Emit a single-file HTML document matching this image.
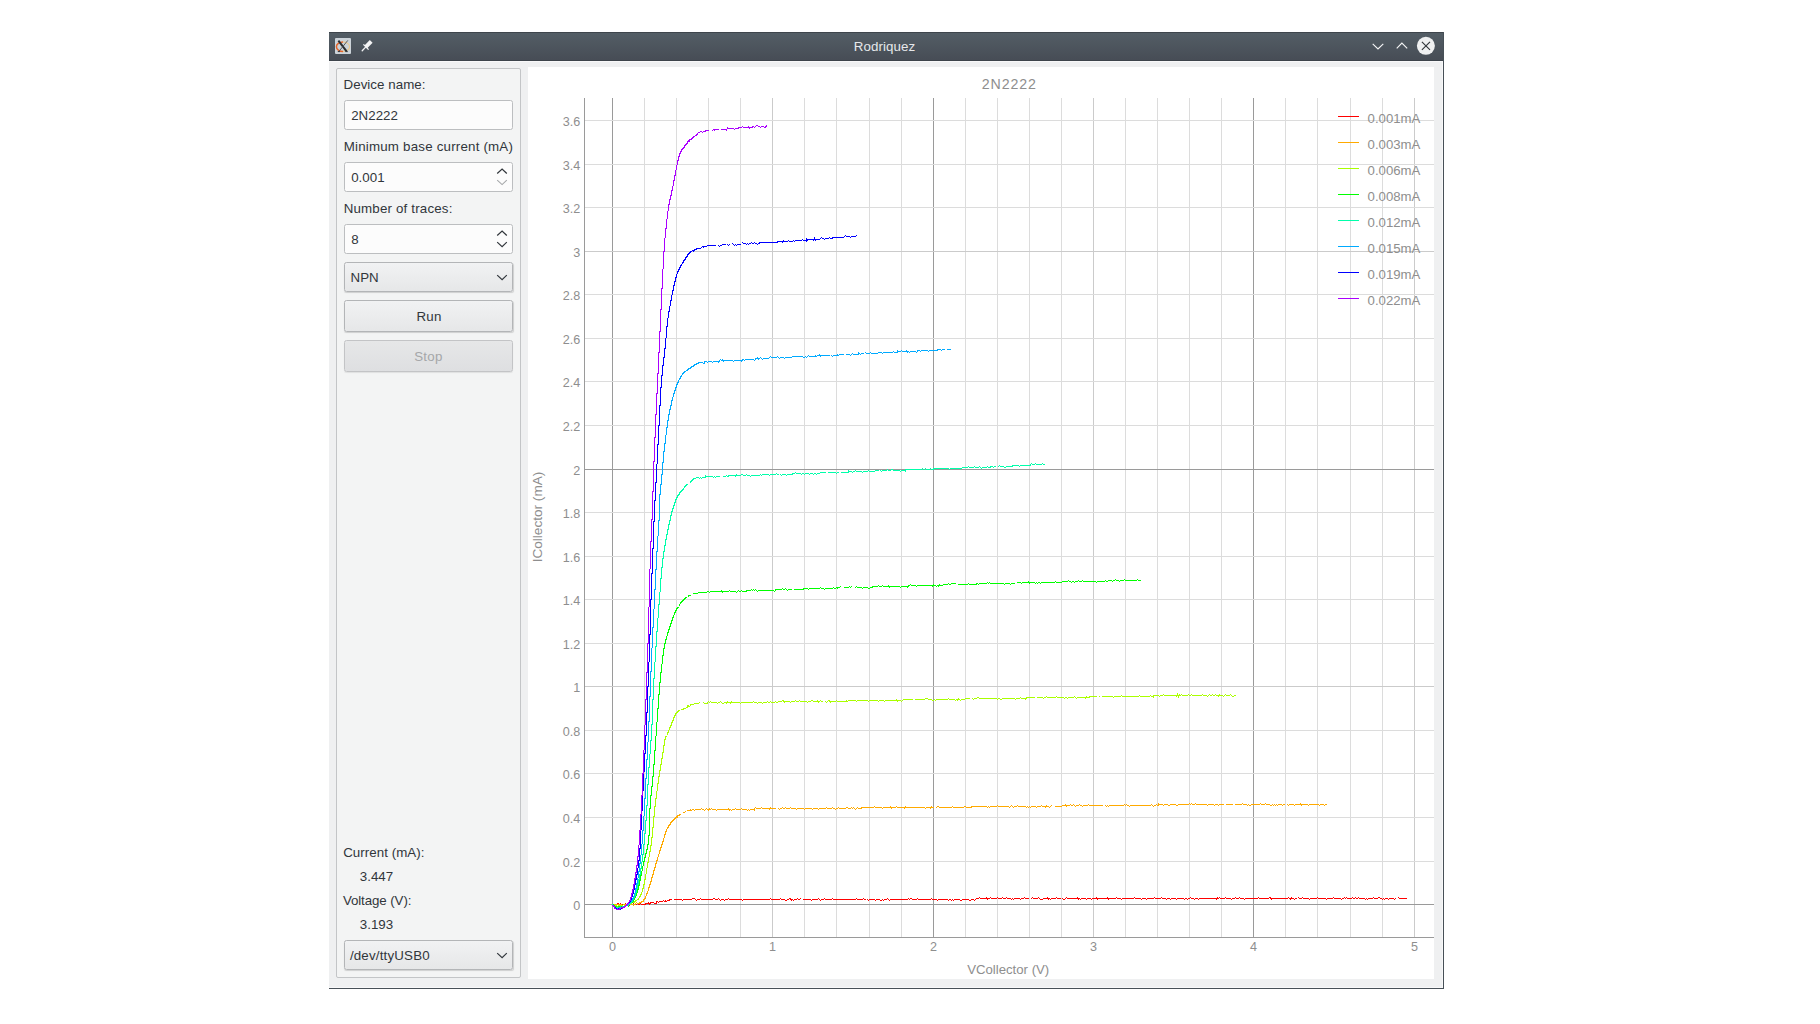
<!DOCTYPE html>
<html><head><meta charset="utf-8"><style>
html,body{margin:0;padding:0;}
body{width:1820px;height:1024px;overflow:hidden;background:#ffffff;position:relative;font-family:"Liberation Sans",sans-serif;}
div{box-sizing:border-box;}
svg{position:absolute;left:0;top:0;}
.fld{position:absolute;border:1px solid #bcbec0;border-radius:2.5px;background:#fcfcfc;}
.btn{position:absolute;border:1px solid #b3b5b7;border-radius:2.5px;background:linear-gradient(#f1f2f3,#e6e7e8);box-shadow:0.5px 1px 1px rgba(0,0,0,0.15);}
.dis{position:absolute;border:1px solid #c3c4c6;border-radius:2.5px;background:linear-gradient(#e6e7e8,#dedfe1);box-shadow:0 1px 1px rgba(0,0,0,0.08);}
</style></head><body>
<div style="position:absolute;left:329px;top:32px;width:1115px;height:29px;background:linear-gradient(#545e66,#464c55);"></div>
<div style="position:absolute;left:329px;top:32px;width:1115px;height:1px;background:#3e454c;"></div>
<div style="position:absolute;left:329px;top:60px;width:1115px;height:1px;background:#3d444b;"></div>
<div style="position:absolute;left:329px;top:61px;width:1114px;height:927px;background:#eff0f1;"></div>
<div style="position:absolute;left:329px;top:61px;width:1114px;height:1px;background:#f8f8f9;"></div>
<div style="position:absolute;left:1442px;top:61px;width:1px;height:927px;background:#f8f8f9;"></div>
<div style="position:absolute;left:329px;top:987px;width:1114px;height:1px;background:#f8f8f9;"></div>
<div style="position:absolute;left:1443px;top:32px;width:1px;height:957px;background:#475057;"></div>
<div style="position:absolute;left:329px;top:988px;width:1115px;height:1px;background:#475057;"></div>
<div style="position:absolute;top:39.62px;font-size:13.33px;line-height:13.33px;color:#e6e8ea;white-space:nowrap;letter-spacing:0.1px;left:584.50px;width:600px;text-align:center;">Rodriquez</div>
<svg width="1820" height="70" style="position:absolute;left:0;top:0">
<rect x="335" y="38" width="16" height="16" rx="1" fill="#ccd3d9"/>
<path d="M 343 42 A 6.6 4.7 0 0 1 343 51.4" fill="none" stroke="#ecc98e" stroke-width="1.1"/>
<path d="M 343 42 A 6.6 4.7 0 0 0 343 51.4" fill="none" stroke="#e4642a" stroke-width="1.5"/>
<path d="M 338.4 40.6 L 346.6 51.3" stroke="#2a2d30" stroke-width="2.0" stroke-linecap="butt"/>
<path d="M 347.8 40.4 L 338.6 51.8" stroke="#4a4e52" stroke-width="0.9"/>
<path d="M 337.8 51.6 L 340 51.6 M 345.5 51.6 L 347.8 51.6" stroke="#2a2d30" stroke-width="0.9"/>
<path d="M 367.2 48.2 L 364.4 45.4 L 369.8 40.0 L 372.6 42.8 Z" fill="#f4f4f5"/>
<path d="M 363.4 44.4 L 368.6 49.6" stroke="#f4f4f5" stroke-width="1.3"/>
<path d="M 365.6 47.1 L 362.2 50.7" stroke="#f4f4f5" stroke-width="1.3" stroke-linecap="round"/>
<polyline points="1372.7,43.8 1378,49 1383.3,43.8" fill="none" stroke="#f5f5f6" stroke-width="1.15"/>
<polyline points="1396.7,48.4 1401.9,43.1 1407.2,48.4" fill="none" stroke="#f5f5f6" stroke-width="1.15"/>
<circle cx="1425.9" cy="45.8" r="9" fill="#eff0f1"/>
<path d="M 1421.9 41.9 L 1430 49.9 M 1430 41.9 L 1421.9 49.9" stroke="#31363b" stroke-width="1.15"/>
</svg>
<div style="position:absolute;left:336px;top:68px;width:185px;height:910px;border:1px solid #c3c5c7;border-radius:2px;background:#f3f4f4;"></div>
<div style="position:absolute;top:77.72px;font-size:13.33px;line-height:13.33px;color:#31363b;white-space:nowrap;letter-spacing:0.05px;left:343.50px;">Device name:</div>
<div class="fld" style="left:344px;top:100px;width:169px;height:30px;"></div>
<div style="position:absolute;top:108.62px;font-size:13.33px;line-height:13.33px;color:#31363b;white-space:nowrap;left:351.20px;">2N2222</div>
<div style="position:absolute;top:139.52px;font-size:13.33px;line-height:13.33px;color:#31363b;white-space:nowrap;letter-spacing:0.2px;left:343.70px;">Minimum base current (mA)</div>
<div class="fld" style="left:344px;top:162px;width:169px;height:30px;"></div>
<div style="position:absolute;top:170.52px;font-size:13.33px;line-height:13.33px;color:#31363b;white-space:nowrap;left:351.20px;">0.001</div>
<div style="position:absolute;top:201.52px;font-size:13.33px;line-height:13.33px;color:#31363b;white-space:nowrap;letter-spacing:0.17px;left:343.70px;">Number of traces:</div>
<div class="fld" style="left:344px;top:224px;width:169px;height:30px;"></div>
<div style="position:absolute;top:233.42px;font-size:13.33px;line-height:13.33px;color:#31363b;white-space:nowrap;left:351.20px;">8</div>
<div class="btn" style="left:344px;top:262px;width:169px;height:30px;"></div>
<div style="position:absolute;top:270.52px;font-size:13.33px;line-height:13.33px;color:#31363b;white-space:nowrap;left:350.60px;">NPN</div>
<div class="btn" style="left:344px;top:300px;width:169px;height:32px;"></div>
<div style="position:absolute;top:310.02px;font-size:13.33px;line-height:13.33px;color:#31363b;white-space:nowrap;letter-spacing:0.2px;left:129.00px;width:600px;text-align:center;">Run</div>
<div class="dis" style="left:344px;top:340px;width:169px;height:32px;"></div>
<div style="position:absolute;top:349.62px;font-size:13.33px;line-height:13.33px;color:#a5a7a9;white-space:nowrap;letter-spacing:0.2px;left:128.40px;width:600px;text-align:center;">Stop</div>
<div style="position:absolute;top:846.12px;font-size:13.33px;line-height:13.33px;color:#31363b;white-space:nowrap;letter-spacing:0.05px;left:343.20px;">Current (mA):</div>
<div style="position:absolute;top:870.22px;font-size:13.33px;line-height:13.33px;color:#31363b;white-space:nowrap;left:359.80px;">3.447</div>
<div style="position:absolute;top:894.22px;font-size:13.33px;line-height:13.33px;color:#31363b;white-space:nowrap;letter-spacing:-0.1px;left:342.90px;">Voltage (V):</div>
<div style="position:absolute;top:917.52px;font-size:13.33px;line-height:13.33px;color:#31363b;white-space:nowrap;left:359.80px;">3.193</div>
<div class="btn" style="left:344px;top:940px;width:169px;height:30px;"></div>
<div style="position:absolute;top:948.72px;font-size:13.33px;line-height:13.33px;color:#31363b;white-space:nowrap;letter-spacing:0.18px;left:349.90px;">/dev/ttyUSB0</div>
<svg width="1820" height="1024" style="position:absolute;left:0;top:0">
<polyline points="497.2,173.5 502.1,169 506.8,173.5" fill="none" stroke="#31363b" stroke-width="1.2"/>
<polyline points="497.2,180.1 502.1,184.6 506.8,180.1" fill="none" stroke="#a6a8aa" stroke-width="1.1"/>
<polyline points="497.2,235.5 502.1,231 506.8,235.5" fill="none" stroke="#31363b" stroke-width="1.2"/>
<polyline points="497.2,242.1 502.1,246.6 506.8,242.1" fill="none" stroke="#31363b" stroke-width="1.2"/>
<polyline points="497.2,275.1 502.1,279.6 506.8,275.1" fill="none" stroke="#31363b" stroke-width="1.2"/>
<polyline points="497.2,953.1 502.1,957.6 506.8,953.1" fill="none" stroke="#31363b" stroke-width="1.2"/>
</svg>
<div style="position:absolute;left:528px;top:67px;width:906px;height:912px;background:#ffffff;"></div>
<svg width="1820" height="1024" style="position:absolute;left:0;top:0" shape-rendering="crispEdges">
<rect x="612" y="98" width="1" height="839" fill="#9a9a9a"/>
<rect x="644" y="98" width="1" height="839" fill="#dcdcdc"/>
<rect x="676" y="98" width="1" height="839" fill="#dcdcdc"/>
<rect x="708" y="98" width="1" height="839" fill="#dcdcdc"/>
<rect x="740" y="98" width="1" height="839" fill="#dcdcdc"/>
<rect x="772" y="98" width="1" height="839" fill="#cbcbcb"/>
<rect x="804" y="98" width="1" height="839" fill="#dcdcdc"/>
<rect x="836" y="98" width="1" height="839" fill="#dcdcdc"/>
<rect x="869" y="98" width="1" height="839" fill="#dcdcdc"/>
<rect x="901" y="98" width="1" height="839" fill="#dcdcdc"/>
<rect x="933" y="98" width="1" height="839" fill="#9a9a9a"/>
<rect x="965" y="98" width="1" height="839" fill="#dcdcdc"/>
<rect x="997" y="98" width="1" height="839" fill="#dcdcdc"/>
<rect x="1029" y="98" width="1" height="839" fill="#dcdcdc"/>
<rect x="1061" y="98" width="1" height="839" fill="#dcdcdc"/>
<rect x="1093" y="98" width="1" height="839" fill="#cbcbcb"/>
<rect x="1125" y="98" width="1" height="839" fill="#dcdcdc"/>
<rect x="1157" y="98" width="1" height="839" fill="#dcdcdc"/>
<rect x="1189" y="98" width="1" height="839" fill="#dcdcdc"/>
<rect x="1221" y="98" width="1" height="839" fill="#dcdcdc"/>
<rect x="1253" y="98" width="1" height="839" fill="#9a9a9a"/>
<rect x="1285" y="98" width="1" height="839" fill="#dcdcdc"/>
<rect x="1317" y="98" width="1" height="839" fill="#dcdcdc"/>
<rect x="1350" y="98" width="1" height="839" fill="#dcdcdc"/>
<rect x="1382" y="98" width="1" height="839" fill="#dcdcdc"/>
<rect x="1414" y="98" width="1" height="839" fill="#cbcbcb"/>
<rect x="585" y="904" width="849" height="1" fill="#9a9a9a"/>
<rect x="585" y="861" width="849" height="1" fill="#dcdcdc"/>
<rect x="585" y="817" width="849" height="1" fill="#dcdcdc"/>
<rect x="585" y="773" width="849" height="1" fill="#dcdcdc"/>
<rect x="585" y="730" width="849" height="1" fill="#dcdcdc"/>
<rect x="585" y="686" width="849" height="1" fill="#cbcbcb"/>
<rect x="585" y="643" width="849" height="1" fill="#dcdcdc"/>
<rect x="585" y="599" width="849" height="1" fill="#dcdcdc"/>
<rect x="585" y="556" width="849" height="1" fill="#dcdcdc"/>
<rect x="585" y="512" width="849" height="1" fill="#dcdcdc"/>
<rect x="585" y="469" width="849" height="1" fill="#9a9a9a"/>
<rect x="585" y="425" width="849" height="1" fill="#dcdcdc"/>
<rect x="585" y="381" width="849" height="1" fill="#dcdcdc"/>
<rect x="585" y="338" width="849" height="1" fill="#dcdcdc"/>
<rect x="585" y="294" width="849" height="1" fill="#dcdcdc"/>
<rect x="585" y="251" width="849" height="1" fill="#cbcbcb"/>
<rect x="585" y="207" width="849" height="1" fill="#dcdcdc"/>
<rect x="585" y="164" width="849" height="1" fill="#dcdcdc"/>
<rect x="585" y="120" width="849" height="1" fill="#dcdcdc"/>
<rect x="584" y="98" width="1" height="840" fill="#9a9a9a"/>
<rect x="584" y="937" width="850" height="1" fill="#9a9a9a"/>
<rect x="1338" y="116" width="21" height="1" fill="#ff0000"/>
<rect x="1338" y="142" width="21" height="1" fill="#ffaa00"/>
<rect x="1338" y="168" width="21" height="1" fill="#aaff00"/>
<rect x="1338" y="194" width="21" height="1" fill="#00ff00"/>
<rect x="1338" y="220" width="21" height="1" fill="#00ffaa"/>
<rect x="1338" y="246" width="21" height="1" fill="#00aaff"/>
<rect x="1338" y="272" width="21" height="1" fill="#0000ff"/>
<rect x="1338" y="298" width="21" height="1" fill="#aa00ff"/>
<polyline points="612.5,904.5 613.5,904.5 614.5,904.5 615.5,904.5 616.5,904.5 617.5,903.5 618.5,903.5 619.5,904.5 620.5,903.5 621.5,905.5 622.5,904.5 623.5,904.5 624.5,904.5 625.5,903.5 626.5,904.5 627.5,904.5 628.5,904.5 629.5,905.5 630.5,903.5 631.5,903.5 632.5,904.5 633.5,903.5 634.5,904.5 635.5,904.5 636.5,904.5 637.5,903.5 638.5,904.5 639.5,904.5 640.5,903.5 641.5,904.5 642.5,904.5 643.5,904.5 644.5,904.5 645.5,904.5 645.5,903.5 646.5,903.5 647.5,903.5 648.5,902.5 649.5,904.5 650.5,903.5 650.5,902.5 651.5,902.5 652.5,902.5 653.5,902.5 654.5,903.5 655.5,903.5 656.5,903.5 656.5,901.5 657.5,901.5 658.5,902.5 659.5,901.5 660.5,901.5 661.5,901.5 662.5,901.5 663.5,900.5 664.5,901.5 665.5,901.5 665.5,900.5 666.5,901.5 667.5,900.5 668.5,900.5 669.5,900.5 669.5,899.5 670.5,899.5 671.5,899.5" fill="none" stroke="#ff0000" stroke-width="1"/>
<polyline points="673.5,899.5 674.5,899.5 675.5,899.5 676.5,899.5 677.5,899.5 678.5,899.5 679.5,899.5 680.5,899.5 681.5,899.5 682.5,900.5 683.5,899.5 684.5,899.5 685.5,899.5 686.5,899.5 687.5,899.5 688.5,899.5 689.5,899.5 690.5,899.5 691.5,899.5 692.5,898.5 693.5,898.5 694.5,898.5 695.5,899.5 696.5,900.5 697.5,899.5 698.5,899.5 699.5,899.5 700.5,898.5 701.5,899.5 702.5,899.5 703.5,899.5 704.5,899.5 705.5,899.5 706.5,899.5 707.5,899.5 708.5,899.5 709.5,899.5 710.5,899.5 711.5,899.5 712.5,899.5 713.5,898.5 714.5,898.5 715.5,899.5 716.5,899.5 717.5,899.5 718.5,898.5 719.5,899.5 720.5,900.5 721.5,899.5 722.5,899.5 723.5,899.5 724.5,900.5 725.5,899.5 726.5,899.5 727.5,899.5 728.5,898.5 729.5,899.5 730.5,899.5 731.5,899.5 732.5,899.5 733.5,899.5 734.5,899.5 735.5,899.5 736.5,899.5 737.5,899.5 738.5,899.5 739.5,899.5 740.5,899.5 741.5,899.5 742.5,900.5 743.5,899.5 744.5,899.5 745.5,899.5 746.5,899.5 747.5,899.5 748.5,899.5 749.5,899.5 750.5,899.5 751.5,899.5 752.5,899.5 753.5,899.5 754.5,899.5 755.5,899.5 756.5,899.5 757.5,899.5 758.5,899.5 759.5,899.5 760.5,899.5 761.5,899.5 762.5,899.5 763.5,899.5 764.5,899.5 765.5,899.5 766.5,899.5 767.5,899.5 768.5,899.5 769.5,899.5 770.5,898.5 771.5,899.5 772.5,899.5 773.5,899.5 774.5,899.5 775.5,899.5 776.5,899.5 777.5,899.5 778.5,899.5 779.5,899.5 780.5,898.5 781.5,899.5 782.5,899.5 783.5,899.5 784.5,899.5 785.5,900.5 786.5,900.5 787.5,899.5 788.5,899.5 789.5,898.5 790.5,898.5 791.5,900.5 792.5,899.5 793.5,900.5 794.5,899.5 795.5,899.5 796.5,899.5 797.5,898.5 798.5,899.5 799.5,899.5 800.5,898.5" fill="none" stroke="#ff0000" stroke-width="1"/>
<polyline points="802.5,899.5 803.5,899.5 804.5,899.5 805.5,899.5 806.5,899.5 807.5,899.5 808.5,899.5 809.5,899.5 810.5,899.5 811.5,900.5 812.5,899.5 813.5,899.5 814.5,899.5 815.5,899.5 816.5,899.5 817.5,899.5 818.5,898.5 819.5,899.5 820.5,900.5 821.5,899.5 822.5,899.5 823.5,899.5 824.5,898.5 825.5,899.5 826.5,899.5 827.5,899.5 828.5,899.5 829.5,899.5 830.5,899.5 831.5,899.5 832.5,898.5 833.5,899.5 834.5,899.5 835.5,899.5 836.5,899.5 837.5,899.5 838.5,899.5 839.5,899.5 840.5,899.5 841.5,899.5 842.5,899.5 843.5,899.5 844.5,899.5 845.5,899.5 846.5,899.5 847.5,899.5 848.5,899.5 849.5,899.5 850.5,899.5 851.5,899.5 852.5,899.5 853.5,899.5 854.5,899.5 855.5,899.5 856.5,898.5 857.5,899.5 858.5,899.5 859.5,899.5 860.5,899.5 861.5,899.5 862.5,899.5 863.5,898.5 864.5,899.5 865.5,899.5" fill="none" stroke="#ff0000" stroke-width="1"/>
<polyline points="867.5,899.5 868.5,900.5 869.5,899.5 870.5,899.5 871.5,899.5 872.5,899.5 873.5,899.5 874.5,899.5 875.5,900.5 876.5,899.5 877.5,899.5 878.5,899.5 879.5,899.5 880.5,900.5 881.5,900.5 882.5,899.5 883.5,900.5 884.5,899.5 885.5,899.5 886.5,899.5 887.5,898.5 888.5,899.5 889.5,900.5 890.5,899.5 891.5,899.5 892.5,899.5 893.5,899.5 894.5,899.5 895.5,899.5 896.5,899.5 897.5,899.5 898.5,899.5 899.5,899.5 900.5,899.5 901.5,899.5 902.5,899.5 903.5,899.5 904.5,899.5 905.5,899.5 906.5,899.5 907.5,899.5 908.5,898.5 909.5,899.5 910.5,898.5 911.5,898.5 912.5,899.5 913.5,899.5 914.5,899.5 915.5,899.5 916.5,899.5 917.5,898.5 918.5,899.5 919.5,899.5 920.5,899.5 921.5,899.5 922.5,899.5 923.5,899.5 924.5,899.5 925.5,899.5 926.5,899.5 927.5,899.5 928.5,899.5 929.5,899.5 930.5,899.5 931.5,898.5 932.5,899.5 933.5,899.5 934.5,899.5 935.5,899.5 936.5,899.5 937.5,900.5 938.5,899.5 939.5,899.5 940.5,899.5 941.5,899.5 942.5,899.5 943.5,899.5 944.5,899.5 945.5,899.5 946.5,899.5 947.5,899.5 948.5,900.5 949.5,899.5 950.5,899.5 951.5,900.5 952.5,899.5 953.5,900.5 954.5,899.5 955.5,899.5 956.5,899.5 957.5,899.5 958.5,899.5 959.5,899.5 960.5,900.5 961.5,900.5 962.5,899.5 963.5,899.5 964.5,899.5 965.5,899.5 966.5,899.5 967.5,899.5 968.5,899.5 969.5,900.5 970.5,900.5 971.5,899.5 972.5,899.5 973.5,899.5 974.5,900.5 975.5,899.5 976.5,898.5 976.5,898.5 977.5,898.5 978.5,898.5 979.5,897.5 980.5,898.5 981.5,898.5 982.5,898.5 983.5,898.5 984.5,898.5 985.5,898.5 986.5,897.5 987.5,899.5 988.5,898.5 989.5,898.5 990.5,897.5 991.5,898.5 992.5,898.5 993.5,898.5 994.5,898.5 995.5,898.5 996.5,898.5 997.5,897.5 998.5,898.5 999.5,898.5 1000.5,898.5 1001.5,898.5 1002.5,897.5 1003.5,898.5 1004.5,898.5 1005.5,898.5 1006.5,897.5 1007.5,898.5 1008.5,898.5 1009.5,898.5 1010.5,898.5 1011.5,899.5 1012.5,898.5 1013.5,899.5 1014.5,898.5 1015.5,898.5 1016.5,898.5 1017.5,898.5 1018.5,898.5 1019.5,898.5 1020.5,899.5 1021.5,898.5 1022.5,898.5 1023.5,898.5 1024.5,897.5 1025.5,898.5 1026.5,898.5 1027.5,898.5 1028.5,898.5" fill="none" stroke="#ff0000" stroke-width="1"/>
<polyline points="1030.5,899.5 1031.5,898.5 1032.5,897.5 1033.5,898.5 1034.5,898.5 1035.5,898.5 1036.5,898.5 1037.5,898.5 1038.5,897.5 1039.5,898.5 1040.5,899.5 1041.5,899.5 1042.5,899.5 1043.5,898.5 1044.5,898.5 1045.5,898.5 1046.5,898.5 1047.5,897.5 1048.5,899.5 1049.5,898.5 1050.5,899.5 1051.5,898.5 1052.5,898.5 1053.5,898.5 1054.5,898.5 1055.5,898.5 1056.5,897.5 1057.5,898.5 1058.5,898.5 1059.5,898.5 1060.5,898.5" fill="none" stroke="#ff0000" stroke-width="1"/>
<polyline points="1062.5,898.5 1063.5,899.5 1064.5,899.5 1065.5,898.5 1066.5,897.5 1067.5,898.5 1068.5,898.5 1069.5,898.5 1070.5,898.5 1071.5,898.5 1072.5,898.5 1073.5,898.5 1074.5,898.5 1075.5,898.5 1076.5,898.5 1077.5,897.5 1078.5,899.5 1079.5,898.5 1080.5,899.5 1081.5,898.5 1082.5,898.5 1083.5,898.5 1084.5,898.5 1085.5,898.5 1086.5,899.5 1087.5,898.5 1088.5,898.5 1089.5,898.5 1090.5,898.5 1091.5,899.5 1092.5,898.5 1093.5,898.5 1094.5,898.5 1095.5,898.5 1096.5,897.5 1097.5,899.5 1098.5,898.5 1099.5,898.5 1100.5,898.5 1101.5,898.5 1102.5,898.5 1103.5,898.5 1104.5,898.5 1105.5,898.5 1106.5,898.5 1107.5,897.5 1108.5,899.5 1109.5,898.5 1110.5,898.5 1111.5,898.5 1112.5,898.5 1113.5,898.5 1114.5,898.5 1115.5,898.5 1116.5,897.5 1117.5,898.5 1118.5,898.5 1119.5,898.5 1120.5,898.5 1121.5,899.5 1122.5,898.5 1123.5,898.5 1124.5,898.5 1125.5,898.5 1126.5,898.5 1127.5,898.5 1128.5,898.5 1129.5,898.5 1130.5,898.5 1131.5,898.5 1132.5,898.5 1133.5,898.5 1134.5,897.5 1135.5,898.5 1136.5,898.5 1137.5,898.5 1138.5,898.5 1139.5,898.5 1140.5,898.5 1141.5,899.5 1142.5,898.5 1143.5,898.5 1144.5,898.5 1145.5,898.5 1146.5,899.5 1147.5,898.5 1148.5,898.5 1149.5,898.5 1150.5,898.5 1151.5,898.5 1152.5,898.5 1153.5,898.5 1154.5,897.5 1155.5,898.5 1156.5,898.5 1157.5,898.5 1158.5,898.5 1159.5,898.5 1160.5,898.5 1161.5,897.5 1162.5,898.5 1163.5,898.5 1164.5,898.5 1165.5,898.5 1166.5,899.5 1167.5,898.5 1168.5,898.5 1169.5,898.5 1170.5,899.5 1171.5,898.5 1172.5,898.5 1173.5,898.5 1174.5,898.5 1175.5,898.5 1176.5,899.5 1177.5,898.5 1178.5,898.5 1179.5,898.5 1180.5,898.5 1181.5,898.5 1182.5,898.5 1183.5,898.5 1184.5,899.5 1185.5,898.5 1186.5,898.5 1187.5,899.5 1188.5,898.5 1189.5,898.5 1190.5,897.5 1191.5,898.5 1192.5,898.5 1193.5,898.5 1194.5,899.5 1195.5,898.5 1196.5,898.5 1197.5,898.5 1198.5,899.5 1199.5,898.5 1200.5,898.5 1201.5,898.5 1202.5,898.5 1203.5,898.5 1204.5,898.5 1205.5,898.5 1206.5,898.5 1207.5,898.5 1208.5,898.5 1209.5,898.5 1210.5,898.5 1211.5,898.5 1212.5,898.5 1213.5,898.5 1214.5,898.5 1215.5,898.5 1216.5,899.5 1217.5,897.5 1218.5,898.5 1219.5,897.5 1220.5,898.5 1221.5,898.5 1222.5,898.5 1223.5,898.5 1224.5,898.5 1225.5,897.5 1226.5,898.5 1227.5,898.5 1228.5,898.5 1229.5,898.5 1230.5,898.5 1231.5,899.5 1232.5,898.5 1233.5,898.5 1234.5,898.5 1235.5,897.5 1236.5,898.5 1237.5,898.5 1238.5,898.5 1239.5,897.5 1240.5,898.5 1241.5,898.5 1242.5,898.5 1243.5,898.5 1244.5,899.5 1245.5,898.5 1246.5,898.5 1247.5,898.5 1248.5,898.5 1249.5,898.5 1250.5,898.5 1251.5,898.5 1252.5,898.5 1253.5,898.5 1254.5,898.5 1255.5,898.5 1256.5,898.5 1257.5,898.5 1258.5,897.5 1259.5,898.5 1260.5,898.5 1261.5,898.5 1262.5,898.5 1263.5,898.5 1264.5,898.5 1265.5,898.5 1266.5,898.5 1267.5,898.5 1268.5,898.5 1269.5,897.5 1270.5,897.5 1271.5,899.5 1272.5,898.5 1273.5,898.5 1274.5,898.5 1275.5,898.5 1276.5,898.5 1277.5,898.5 1278.5,898.5 1279.5,898.5 1280.5,898.5 1281.5,898.5 1282.5,898.5 1283.5,898.5 1284.5,898.5 1285.5,898.5 1286.5,898.5 1287.5,898.5 1288.5,897.5 1289.5,898.5 1290.5,899.5 1291.5,897.5 1292.5,898.5 1293.5,898.5 1294.5,899.5 1295.5,898.5 1296.5,898.5" fill="none" stroke="#ff0000" stroke-width="1"/>
<polyline points="1298.5,897.5 1299.5,898.5 1300.5,898.5 1301.5,898.5 1302.5,897.5 1303.5,898.5 1304.5,898.5 1305.5,898.5 1306.5,898.5 1307.5,898.5 1308.5,898.5 1309.5,899.5 1310.5,898.5 1311.5,898.5 1312.5,898.5 1313.5,898.5 1314.5,898.5 1315.5,898.5 1316.5,898.5 1317.5,897.5 1318.5,898.5 1319.5,898.5 1320.5,898.5 1321.5,898.5 1322.5,898.5 1323.5,898.5 1324.5,898.5 1325.5,898.5 1326.5,899.5 1327.5,898.5 1328.5,898.5 1329.5,898.5 1330.5,898.5 1331.5,898.5 1332.5,898.5 1333.5,897.5 1334.5,898.5 1335.5,898.5 1336.5,898.5 1337.5,898.5 1338.5,898.5 1339.5,898.5 1340.5,898.5 1341.5,899.5 1342.5,898.5 1343.5,898.5 1344.5,897.5 1345.5,898.5 1346.5,897.5 1347.5,898.5 1348.5,898.5 1349.5,898.5 1350.5,898.5 1351.5,898.5 1352.5,897.5 1353.5,898.5 1354.5,898.5 1355.5,897.5 1356.5,898.5 1357.5,898.5 1358.5,897.5 1359.5,898.5 1360.5,898.5 1361.5,898.5 1362.5,898.5 1363.5,898.5 1364.5,898.5 1365.5,899.5 1366.5,898.5 1367.5,899.5 1368.5,898.5 1369.5,898.5 1370.5,898.5 1371.5,898.5 1372.5,898.5 1373.5,897.5 1374.5,898.5 1375.5,898.5 1376.5,898.5 1377.5,898.5 1378.5,897.5 1379.5,897.5 1380.5,898.5 1381.5,898.5 1382.5,899.5 1383.5,898.5 1384.5,899.5 1385.5,898.5 1386.5,898.5 1387.5,898.5 1388.5,899.5 1389.5,898.5 1390.5,898.5 1391.5,898.5 1392.5,898.5 1393.5,898.5 1394.5,899.5 1395.5,898.5" fill="none" stroke="#ff0000" stroke-width="1"/>
<polyline points="1397.5,898.5 1398.5,897.5 1399.5,898.5 1400.5,898.5 1401.5,898.5 1402.5,898.5 1403.5,898.5 1404.5,898.5 1405.5,898.5 1406.5,898.5" fill="none" stroke="#ff0000" stroke-width="1"/>
<polyline points="612.5,904.5 613.5,904.5 614.5,904.5 615.5,904.5 616.5,904.5 617.5,904.5 618.5,904.5 619.5,904.5 620.5,904.5 621.5,904.5 622.5,905.5 623.5,904.5 624.5,904.5 625.5,904.5 626.5,904.5 627.5,903.5 628.5,904.5 629.5,904.5 630.5,904.5 631.5,904.5 632.5,904.5 633.5,905.5 634.5,904.5 635.5,904.5 635.5,903.5 636.5,902.5 637.5,903.5 638.5,903.5 639.5,903.5 639.5,902.5 640.5,902.5 641.5,902.5 641.5,901.5 642.5,901.5 643.5,901.5 643.5,900.5 643.5,899.5 644.5,899.5 644.5,898.5 645.5,898.5 645.5,897.5 645.5,896.5 646.5,895.5 646.5,894.5 646.5,893.5 647.5,893.5 647.5,892.5 647.5,891.5 648.5,890.5 648.5,889.5 648.5,888.5 648.5,887.5 649.5,887.5 649.5,886.5 649.5,885.5 649.5,884.5 650.5,884.5 650.5,883.5 650.5,882.5 650.5,881.5 651.5,881.5 651.5,880.5 651.5,879.5 651.5,878.5 651.5,877.5 652.5,877.5 652.5,876.5 652.5,875.5 652.5,874.5 653.5,874.5 653.5,873.5 653.5,872.5 653.5,871.5 653.5,870.5 654.5,870.5 654.5,869.5 654.5,868.5 654.5,867.5 655.5,867.5 655.5,866.5 655.5,865.5 655.5,864.5 655.5,863.5 656.5,863.5 656.5,862.5 656.5,861.5 656.5,860.5 657.5,860.5 657.5,859.5 657.5,858.5 657.5,857.5 658.5,856.5 658.5,855.5 658.5,854.5 659.5,853.5 659.5,852.5 659.5,851.5 659.5,850.5 660.5,850.5 660.5,849.5 660.5,848.5 660.5,847.5 661.5,847.5 661.5,846.5 661.5,845.5 661.5,844.5 662.5,844.5 662.5,843.5 662.5,842.5 662.5,841.5 663.5,841.5 663.5,840.5 663.5,839.5 663.5,838.5 664.5,837.5 664.5,836.5 664.5,835.5 664.5,834.5 665.5,834.5 665.5,833.5 665.5,832.5 665.5,831.5 666.5,831.5 666.5,830.5 666.5,829.5 667.5,828.5 667.5,827.5 668.5,827.5 668.5,826.5 668.5,825.5 669.5,825.5 669.5,824.5 670.5,824.5 670.5,823.5 670.5,822.5 671.5,822.5 671.5,821.5 672.5,821.5 672.5,820.5 673.5,820.5 673.5,819.5 674.5,819.5 674.5,818.5 675.5,818.5 675.5,817.5 676.5,817.5 676.5,816.5 677.5,817.5 677.5,815.5 678.5,815.5 679.5,815.5 679.5,814.5 680.5,814.5" fill="none" stroke="#ffaa00" stroke-width="1"/>
<polyline points="682.5,813.5 683.5,812.5 684.5,812.5 685.5,811.5" fill="none" stroke="#ffaa00" stroke-width="1"/>
<polyline points="686.5,811.5 687.5,810.5 687.5,810.5 688.5,810.5 689.5,810.5 690.5,810.5 690.5,809.5 691.5,810.5 692.5,809.5 693.5,809.5 694.5,810.5 695.5,809.5 696.5,809.5 697.5,809.5 698.5,809.5 699.5,809.5 700.5,809.5 701.5,808.5 702.5,809.5 703.5,809.5 704.5,810.5 705.5,809.5 706.5,808.5 707.5,809.5 708.5,810.5 709.5,808.5 710.5,809.5 711.5,808.5 712.5,809.5 713.5,809.5 714.5,809.5 715.5,809.5 716.5,810.5 717.5,809.5 718.5,809.5 719.5,809.5 720.5,809.5 721.5,809.5 722.5,809.5 723.5,809.5 724.5,809.5 725.5,809.5 726.5,809.5 727.5,809.5 728.5,808.5 729.5,810.5 730.5,809.5 731.5,810.5 732.5,809.5 733.5,809.5 734.5,809.5 735.5,808.5 736.5,809.5 737.5,809.5 738.5,809.5 739.5,809.5 740.5,809.5 741.5,808.5 742.5,809.5 743.5,809.5 744.5,809.5 745.5,809.5 746.5,809.5 747.5,810.5 748.5,809.5 749.5,810.5 750.5,809.5 751.5,809.5 752.5,809.5 753.5,809.5 754.5,810.5 754.5,808.5 755.5,807.5 756.5,808.5 757.5,808.5 758.5,808.5 759.5,808.5 760.5,808.5 761.5,807.5 762.5,808.5 763.5,808.5 764.5,808.5 765.5,808.5 766.5,808.5 767.5,808.5 768.5,808.5 769.5,809.5 770.5,807.5 771.5,808.5 772.5,808.5 773.5,808.5 774.5,808.5 775.5,808.5" fill="none" stroke="#ffaa00" stroke-width="1"/>
<polyline points="777.5,808.5 778.5,808.5 779.5,809.5 780.5,808.5 781.5,808.5 782.5,807.5 783.5,808.5 784.5,808.5 785.5,807.5 786.5,808.5 787.5,808.5 788.5,808.5 789.5,808.5 790.5,807.5 791.5,808.5 792.5,808.5 793.5,808.5 794.5,808.5 795.5,808.5 796.5,809.5 797.5,808.5 798.5,808.5 799.5,808.5 800.5,808.5 801.5,808.5 802.5,808.5 803.5,808.5 804.5,809.5 805.5,808.5 806.5,808.5 807.5,808.5 808.5,808.5 809.5,808.5 810.5,808.5 811.5,808.5 812.5,809.5 813.5,808.5 814.5,808.5 815.5,808.5 816.5,808.5 817.5,808.5 818.5,809.5 819.5,808.5 820.5,808.5 821.5,808.5 822.5,808.5 823.5,808.5 824.5,808.5 825.5,808.5 826.5,807.5 827.5,808.5 828.5,808.5 829.5,808.5 830.5,808.5 831.5,808.5 832.5,807.5 833.5,808.5 834.5,808.5 835.5,809.5 836.5,808.5 837.5,808.5 838.5,807.5 839.5,808.5 840.5,808.5 841.5,808.5 842.5,808.5 843.5,808.5 844.5,808.5 845.5,808.5 846.5,807.5 847.5,807.5 848.5,808.5 849.5,808.5 850.5,808.5 851.5,807.5 852.5,808.5 853.5,807.5 854.5,808.5 855.5,809.5 856.5,808.5 857.5,807.5 858.5,808.5 859.5,808.5 860.5,808.5 861.5,808.5 861.5,807.5 862.5,807.5 863.5,807.5 864.5,807.5 865.5,807.5 866.5,807.5 867.5,807.5 868.5,807.5 869.5,807.5 870.5,807.5 871.5,807.5 872.5,807.5 873.5,807.5 874.5,806.5 875.5,807.5 876.5,807.5 877.5,807.5 878.5,807.5 879.5,807.5 880.5,807.5 881.5,807.5 882.5,808.5 883.5,807.5 884.5,807.5 885.5,807.5 886.5,807.5 887.5,807.5 888.5,807.5 889.5,807.5 890.5,806.5 891.5,808.5 892.5,807.5 893.5,807.5 894.5,807.5 895.5,807.5 896.5,806.5 897.5,807.5 898.5,807.5 899.5,807.5 900.5,807.5 901.5,807.5 902.5,807.5 903.5,807.5 904.5,808.5 905.5,806.5 906.5,807.5 907.5,807.5 908.5,807.5 909.5,807.5 910.5,807.5 911.5,807.5 912.5,807.5 913.5,807.5 914.5,807.5 915.5,807.5 916.5,807.5 917.5,807.5 918.5,807.5 919.5,807.5 920.5,807.5 921.5,807.5 922.5,807.5 923.5,807.5 924.5,807.5 925.5,808.5 926.5,807.5 927.5,807.5 928.5,807.5 929.5,807.5 930.5,808.5 931.5,806.5 932.5,807.5 933.5,807.5" fill="none" stroke="#ffaa00" stroke-width="1"/>
<polyline points="935.5,807.5 936.5,807.5 937.5,806.5 938.5,806.5 939.5,807.5 940.5,807.5 941.5,807.5 942.5,807.5 943.5,807.5 944.5,807.5 945.5,807.5 946.5,807.5 947.5,807.5 948.5,807.5 949.5,807.5 950.5,807.5 951.5,807.5 952.5,806.5 953.5,807.5 954.5,807.5 955.5,807.5 956.5,807.5 957.5,807.5 958.5,807.5 959.5,807.5 960.5,807.5 961.5,807.5 962.5,807.5 963.5,807.5 964.5,806.5 965.5,806.5 966.5,807.5 967.5,807.5 968.5,807.5 969.5,807.5 970.5,807.5 971.5,807.5 971.5,806.5 972.5,806.5 973.5,806.5 974.5,806.5 975.5,806.5 976.5,806.5 977.5,806.5 978.5,806.5 979.5,806.5 980.5,806.5 981.5,806.5 982.5,806.5 983.5,806.5 984.5,806.5 985.5,806.5 986.5,806.5 987.5,807.5 988.5,806.5 989.5,807.5 990.5,806.5 991.5,806.5 992.5,806.5 993.5,806.5 994.5,806.5 995.5,806.5 996.5,806.5 997.5,805.5 998.5,806.5 999.5,806.5 1000.5,806.5 1001.5,806.5 1002.5,806.5 1003.5,806.5 1004.5,806.5 1005.5,806.5 1006.5,806.5 1007.5,806.5 1008.5,806.5 1009.5,807.5 1010.5,806.5 1011.5,805.5 1012.5,806.5 1013.5,807.5 1014.5,806.5 1015.5,806.5 1016.5,806.5 1017.5,805.5 1018.5,806.5 1019.5,806.5 1020.5,806.5 1021.5,806.5 1022.5,806.5 1023.5,806.5 1024.5,806.5 1025.5,806.5 1026.5,807.5 1027.5,806.5 1028.5,807.5 1029.5,806.5 1030.5,807.5 1031.5,806.5 1032.5,806.5 1033.5,806.5 1034.5,806.5 1035.5,806.5 1036.5,807.5 1037.5,806.5 1038.5,806.5 1039.5,806.5 1040.5,806.5 1041.5,805.5 1042.5,806.5 1043.5,806.5 1044.5,806.5 1045.5,807.5 1046.5,805.5 1047.5,806.5 1048.5,806.5 1049.5,807.5 1050.5,806.5 1051.5,805.5 1052.5,806.5" fill="none" stroke="#ffaa00" stroke-width="1"/>
<polyline points="1054.5,806.5 1055.5,806.5 1056.5,806.5 1057.5,806.5 1058.5,806.5 1059.5,806.5 1060.5,806.5 1061.5,806.5 1062.5,805.5 1063.5,805.5 1064.5,805.5 1065.5,804.5 1066.5,806.5 1067.5,805.5 1068.5,805.5 1069.5,805.5 1070.5,804.5 1071.5,805.5 1072.5,805.5 1073.5,804.5 1074.5,805.5 1075.5,806.5 1076.5,805.5 1077.5,805.5 1078.5,805.5 1079.5,804.5 1080.5,805.5 1081.5,805.5 1082.5,806.5 1083.5,805.5 1084.5,805.5 1085.5,805.5 1086.5,805.5 1087.5,805.5 1088.5,804.5 1089.5,805.5 1090.5,805.5 1091.5,805.5 1092.5,805.5 1093.5,805.5 1094.5,805.5 1095.5,805.5 1096.5,805.5 1097.5,805.5 1098.5,805.5 1099.5,805.5 1100.5,805.5 1101.5,805.5 1102.5,805.5" fill="none" stroke="#ffaa00" stroke-width="1"/>
<polyline points="1104.5,805.5 1105.5,805.5 1106.5,806.5 1107.5,805.5 1108.5,806.5 1109.5,805.5 1110.5,805.5 1111.5,805.5 1112.5,805.5 1113.5,805.5 1114.5,805.5 1115.5,805.5 1116.5,805.5 1117.5,805.5 1118.5,805.5 1119.5,805.5 1120.5,805.5 1121.5,805.5 1122.5,805.5 1123.5,805.5 1124.5,804.5 1125.5,805.5 1126.5,804.5 1127.5,805.5 1128.5,805.5 1129.5,806.5 1130.5,805.5 1131.5,805.5 1132.5,805.5 1133.5,805.5 1134.5,805.5 1135.5,805.5 1136.5,805.5 1137.5,805.5 1138.5,805.5 1139.5,805.5 1140.5,805.5 1141.5,805.5 1142.5,805.5 1143.5,805.5 1144.5,805.5 1145.5,805.5 1146.5,805.5 1147.5,805.5 1148.5,805.5 1149.5,805.5 1150.5,805.5 1151.5,804.5 1152.5,805.5 1153.5,806.5 1154.5,805.5 1155.5,805.5 1156.5,804.5 1157.5,805.5 1158.5,805.5 1158.5,803.5 1159.5,804.5 1160.5,804.5 1161.5,804.5 1162.5,804.5 1163.5,805.5 1164.5,804.5 1165.5,804.5 1166.5,804.5 1167.5,804.5 1168.5,805.5 1169.5,805.5 1170.5,804.5 1171.5,804.5 1172.5,804.5 1173.5,804.5 1174.5,804.5 1175.5,804.5 1176.5,805.5 1177.5,805.5 1178.5,804.5 1179.5,804.5 1180.5,804.5 1181.5,804.5 1182.5,804.5 1183.5,804.5 1184.5,804.5 1185.5,804.5 1186.5,804.5 1187.5,804.5 1188.5,804.5 1189.5,803.5 1190.5,804.5 1191.5,803.5 1192.5,804.5 1193.5,804.5 1194.5,804.5 1195.5,803.5 1196.5,804.5 1197.5,804.5 1198.5,804.5 1199.5,804.5 1200.5,804.5 1201.5,804.5 1202.5,804.5 1203.5,804.5 1204.5,804.5 1205.5,804.5 1206.5,804.5 1207.5,805.5 1208.5,804.5 1209.5,804.5 1210.5,804.5 1211.5,804.5 1212.5,804.5 1213.5,804.5 1214.5,805.5 1215.5,804.5 1216.5,804.5 1217.5,804.5 1218.5,805.5 1219.5,804.5 1220.5,804.5 1221.5,804.5 1222.5,804.5 1223.5,804.5" fill="none" stroke="#ffaa00" stroke-width="1"/>
<polyline points="1225.5,804.5 1226.5,804.5 1227.5,804.5 1228.5,804.5 1229.5,804.5 1230.5,804.5 1231.5,804.5 1232.5,804.5" fill="none" stroke="#ffaa00" stroke-width="1"/>
<polyline points="1234.5,804.5 1235.5,804.5 1236.5,804.5 1237.5,804.5 1238.5,804.5 1239.5,804.5 1240.5,804.5 1241.5,804.5 1242.5,803.5 1243.5,804.5 1244.5,804.5 1245.5,804.5 1246.5,804.5 1247.5,805.5 1248.5,804.5 1249.5,805.5 1250.5,805.5 1251.5,804.5 1252.5,804.5 1253.5,804.5 1254.5,804.5 1255.5,804.5 1256.5,804.5 1257.5,804.5 1258.5,804.5 1259.5,804.5 1260.5,803.5 1261.5,804.5 1262.5,804.5 1263.5,804.5 1264.5,804.5 1265.5,803.5 1266.5,804.5 1267.5,804.5 1268.5,804.5 1269.5,804.5 1270.5,805.5 1271.5,805.5 1272.5,804.5 1273.5,805.5 1274.5,804.5 1275.5,805.5 1276.5,804.5 1277.5,805.5 1278.5,804.5 1279.5,804.5 1280.5,804.5 1281.5,804.5 1282.5,805.5 1283.5,804.5 1284.5,804.5 1285.5,805.5" fill="none" stroke="#ffaa00" stroke-width="1"/>
<polyline points="1287.5,804.5 1288.5,805.5 1289.5,804.5 1290.5,804.5 1291.5,804.5 1292.5,804.5 1293.5,804.5 1294.5,805.5 1295.5,804.5 1296.5,804.5 1297.5,804.5 1298.5,804.5 1299.5,804.5 1300.5,803.5 1301.5,805.5 1302.5,804.5 1303.5,804.5 1304.5,804.5 1305.5,804.5 1306.5,804.5 1307.5,804.5 1308.5,805.5 1309.5,804.5 1310.5,804.5 1311.5,804.5 1312.5,804.5 1313.5,804.5 1314.5,804.5 1315.5,804.5 1316.5,804.5 1317.5,804.5 1318.5,804.5 1319.5,805.5 1320.5,804.5 1321.5,804.5 1322.5,804.5 1323.5,804.5 1324.5,805.5 1325.5,804.5 1326.5,804.5" fill="none" stroke="#ffaa00" stroke-width="1"/>
<polyline points="612.5,904.5 613.5,904.5 613.5,905.5 614.5,905.5 615.5,905.5 616.5,905.5 617.5,906.5 618.5,906.5 618.5,905.5 619.5,905.5 620.5,905.5 621.5,905.5 622.5,905.5 623.5,904.5 624.5,905.5 625.5,905.5 626.5,905.5 627.5,905.5 627.5,904.5 628.5,904.5 629.5,904.5 630.5,904.5 630.5,903.5 631.5,903.5 631.5,903.5 632.5,901.5 633.5,902.5 634.5,902.5 634.5,901.5 635.5,901.5 635.5,900.5 636.5,900.5 637.5,899.5 638.5,899.5 638.5,898.5 639.5,897.5 639.5,896.5 640.5,896.5 640.5,895.5 640.5,894.5 641.5,894.5 641.5,893.5 641.5,892.5 642.5,891.5 642.5,890.5 642.5,889.5 642.5,888.5 643.5,888.5 643.5,887.5 643.5,886.5 643.5,885.5 643.5,884.5 644.5,884.5 644.5,883.5 644.5,882.5 644.5,881.5 644.5,880.5 644.5,879.5 645.5,879.5 645.5,878.5 645.5,877.5 645.5,876.5 645.5,875.5 645.5,874.5 646.5,873.5 646.5,872.5 646.5,871.5 646.5,870.5 646.5,869.5 646.5,868.5 647.5,867.5 647.5,866.5 647.5,865.5 647.5,864.5 647.5,863.5 647.5,862.5 648.5,862.5 648.5,861.5 648.5,860.5 648.5,859.5 648.5,858.5 648.5,857.5 649.5,856.5 649.5,855.5 649.5,854.5 649.5,853.5 649.5,852.5 649.5,851.5 650.5,851.5 650.5,850.5 650.5,849.5 650.5,848.5 650.5,847.5 650.5,846.5 650.5,845.5 651.5,845.5 651.5,844.5 651.5,843.5 651.5,842.5 651.5,841.5 651.5,840.5 651.5,839.5 651.5,838.5 651.5,837.5 652.5,837.5 652.5,836.5 652.5,835.5 652.5,834.5 652.5,833.5 652.5,832.5 652.5,831.5 652.5,830.5 652.5,829.5 652.5,828.5 652.5,827.5 653.5,827.5 653.5,826.5 653.5,825.5 653.5,824.5 653.5,823.5 653.5,822.5 653.5,821.5 653.5,820.5 653.5,819.5 653.5,818.5 653.5,817.5 653.5,816.5 654.5,816.5 654.5,815.5 654.5,814.5 654.5,813.5 654.5,812.5 654.5,811.5 654.5,810.5 654.5,809.5 654.5,808.5 654.5,807.5 654.5,806.5 655.5,806.5 655.5,805.5 655.5,804.5 655.5,803.5 655.5,802.5 655.5,801.5 655.5,800.5 655.5,799.5 655.5,798.5 656.5,798.5 656.5,797.5 656.5,796.5 656.5,795.5 656.5,794.5 656.5,793.5 656.5,792.5 656.5,791.5 657.5,790.5 657.5,789.5 657.5,788.5 657.5,787.5 657.5,786.5 657.5,785.5 657.5,784.5 657.5,783.5 658.5,783.5 658.5,782.5 658.5,781.5 658.5,780.5 658.5,779.5 658.5,778.5 658.5,777.5 658.5,776.5 659.5,776.5 659.5,775.5 659.5,774.5 659.5,773.5 659.5,772.5 659.5,771.5 659.5,770.5 660.5,770.5 660.5,769.5 660.5,768.5 660.5,767.5 660.5,766.5 660.5,765.5 660.5,764.5 661.5,764.5 661.5,763.5 661.5,762.5 661.5,761.5 661.5,760.5 661.5,759.5 661.5,758.5 662.5,758.5 662.5,757.5 662.5,756.5 662.5,755.5 662.5,754.5 662.5,753.5 662.5,752.5 663.5,752.5 663.5,751.5 663.5,750.5 663.5,749.5 663.5,748.5 663.5,747.5 663.5,746.5 663.5,745.5 664.5,745.5 664.5,744.5 664.5,743.5 664.5,742.5 664.5,741.5 664.5,740.5 664.5,739.5 665.5,739.5 665.5,738.5 665.5,737.5 665.5,736.5 666.5,736.5" fill="none" stroke="#aaff00" stroke-width="1"/>
<polyline points="666.5,734.5 667.5,734.5 667.5,733.5 667.5,732.5 668.5,732.5 668.5,731.5 668.5,730.5 669.5,729.5 669.5,728.5 669.5,727.5 670.5,727.5 670.5,726.5 670.5,725.5 671.5,725.5 671.5,724.5 671.5,723.5 671.5,722.5 672.5,722.5 672.5,721.5 672.5,720.5 673.5,720.5 673.5,719.5 673.5,718.5 673.5,717.5 674.5,717.5 674.5,716.5 674.5,715.5 675.5,715.5 675.5,714.5 675.5,713.5 676.5,713.5 676.5,712.5 677.5,712.5 677.5,711.5 678.5,711.5 678.5,710.5 679.5,710.5" fill="none" stroke="#aaff00" stroke-width="1"/>
<polyline points="680.5,709.5 681.5,709.5 682.5,709.5 683.5,709.5 683.5,708.5 684.5,708.5 685.5,708.5 685.5,708.5 686.5,707.5 687.5,707.5 687.5,705.5 688.5,706.5 688.5,705.5 689.5,706.5 690.5,705.5 690.5,704.5 691.5,704.5 692.5,704.5 693.5,704.5 694.5,703.5 695.5,703.5 696.5,703.5 697.5,703.5 698.5,703.5 699.5,702.5 700.5,703.5" fill="none" stroke="#aaff00" stroke-width="1"/>
<polyline points="702.5,703.5 703.5,702.5 704.5,703.5 705.5,703.5 706.5,703.5 707.5,703.5 707.5,702.5 708.5,701.5 709.5,702.5 710.5,701.5 711.5,702.5 712.5,702.5 713.5,702.5 714.5,702.5 715.5,702.5 716.5,702.5 717.5,703.5 718.5,702.5 719.5,702.5 720.5,701.5 721.5,702.5 722.5,703.5 723.5,703.5 724.5,702.5 725.5,702.5 726.5,703.5 727.5,701.5 728.5,702.5 729.5,702.5 730.5,703.5 731.5,701.5 732.5,702.5 733.5,702.5 734.5,702.5 735.5,702.5 736.5,702.5 737.5,702.5 738.5,702.5 739.5,702.5 740.5,703.5 741.5,702.5 742.5,702.5 743.5,702.5 744.5,702.5 745.5,702.5 746.5,702.5 747.5,702.5 748.5,702.5 749.5,702.5 750.5,702.5 751.5,702.5 752.5,702.5 753.5,701.5 754.5,702.5 755.5,702.5 756.5,702.5 757.5,703.5 758.5,702.5 759.5,702.5 760.5,702.5 761.5,702.5 762.5,703.5 763.5,702.5 764.5,702.5 765.5,702.5 766.5,702.5 767.5,701.5 768.5,702.5 769.5,702.5 770.5,701.5 771.5,702.5 772.5,702.5 773.5,702.5 774.5,702.5 775.5,701.5 776.5,702.5 777.5,702.5 778.5,701.5 779.5,701.5 780.5,701.5 781.5,701.5 782.5,700.5 783.5,700.5 784.5,702.5 785.5,701.5 786.5,701.5 787.5,701.5 788.5,701.5 789.5,701.5 790.5,702.5 791.5,701.5 792.5,701.5 793.5,701.5 794.5,701.5 795.5,700.5 796.5,701.5 797.5,701.5 798.5,701.5 799.5,700.5 800.5,701.5 801.5,701.5 802.5,701.5 803.5,701.5 804.5,701.5 805.5,701.5 806.5,701.5 807.5,702.5 808.5,701.5 809.5,701.5 810.5,701.5 811.5,700.5 812.5,700.5 813.5,701.5 814.5,701.5 815.5,701.5 816.5,701.5 817.5,700.5 818.5,702.5 819.5,701.5 820.5,700.5 821.5,701.5 822.5,701.5" fill="none" stroke="#aaff00" stroke-width="1"/>
<polyline points="824.5,701.5 825.5,701.5 826.5,702.5 827.5,701.5 828.5,700.5 829.5,700.5 830.5,702.5 831.5,701.5 832.5,701.5 833.5,701.5 834.5,701.5 835.5,701.5 836.5,700.5 837.5,701.5 838.5,701.5 839.5,701.5 840.5,701.5 841.5,701.5 842.5,701.5 843.5,701.5 844.5,701.5 845.5,701.5 846.5,701.5 846.5,700.5 847.5,701.5 848.5,700.5 849.5,700.5 850.5,700.5 851.5,700.5 852.5,700.5 853.5,700.5 854.5,700.5 855.5,700.5 856.5,701.5 857.5,700.5 858.5,700.5 859.5,700.5 860.5,700.5 861.5,700.5 862.5,700.5 863.5,700.5 864.5,700.5 865.5,700.5 866.5,700.5 867.5,700.5 868.5,701.5 869.5,700.5 870.5,700.5 871.5,700.5 872.5,700.5 873.5,700.5 874.5,700.5 875.5,700.5 876.5,700.5 877.5,700.5 878.5,701.5 879.5,700.5 880.5,700.5 881.5,700.5 882.5,700.5 883.5,700.5 884.5,701.5 885.5,700.5 886.5,700.5 887.5,700.5 888.5,700.5 889.5,700.5 890.5,700.5 891.5,700.5 892.5,700.5 893.5,700.5 894.5,700.5 895.5,700.5 896.5,699.5 897.5,701.5 898.5,700.5 899.5,700.5 900.5,700.5 901.5,701.5 902.5,700.5 903.5,699.5 904.5,699.5 905.5,699.5 906.5,699.5 907.5,699.5 908.5,699.5 909.5,699.5 910.5,699.5 911.5,699.5 912.5,699.5" fill="none" stroke="#aaff00" stroke-width="1"/>
<polyline points="914.5,699.5 915.5,699.5 916.5,699.5 917.5,699.5 918.5,699.5 919.5,699.5 920.5,699.5 921.5,699.5 922.5,699.5 923.5,699.5 924.5,699.5 925.5,698.5 926.5,698.5 927.5,698.5 928.5,699.5 929.5,699.5 930.5,699.5 931.5,699.5 932.5,700.5 933.5,700.5 934.5,699.5 935.5,700.5 936.5,699.5 937.5,699.5 938.5,699.5 939.5,699.5 940.5,699.5 941.5,699.5 942.5,699.5 943.5,699.5 944.5,699.5 945.5,699.5 946.5,699.5 947.5,699.5 948.5,698.5 949.5,699.5 950.5,699.5 951.5,699.5 952.5,699.5 953.5,699.5 954.5,699.5 955.5,700.5 956.5,699.5 957.5,700.5 958.5,698.5 959.5,699.5 960.5,700.5 961.5,699.5 962.5,699.5 963.5,699.5 964.5,699.5 965.5,698.5 966.5,698.5 967.5,698.5 968.5,698.5 969.5,698.5" fill="none" stroke="#aaff00" stroke-width="1"/>
<polyline points="971.5,698.5 972.5,698.5 973.5,699.5 974.5,698.5 975.5,698.5 976.5,698.5 977.5,697.5 978.5,697.5 979.5,698.5 980.5,698.5 981.5,698.5 982.5,698.5 983.5,698.5 984.5,698.5 985.5,698.5 986.5,698.5 987.5,698.5 988.5,698.5 989.5,698.5 990.5,698.5 991.5,698.5 992.5,698.5 993.5,698.5 994.5,698.5 995.5,698.5 996.5,698.5 997.5,699.5 998.5,698.5 999.5,698.5 1000.5,699.5 1001.5,699.5 1002.5,698.5 1003.5,698.5 1004.5,698.5 1005.5,698.5 1006.5,698.5 1007.5,698.5 1008.5,698.5 1009.5,698.5 1010.5,698.5 1011.5,698.5 1012.5,698.5 1013.5,698.5 1014.5,698.5 1015.5,699.5 1016.5,698.5 1017.5,698.5 1018.5,698.5 1019.5,698.5 1020.5,697.5 1021.5,698.5 1022.5,698.5 1023.5,698.5 1024.5,698.5 1025.5,699.5 1026.5,697.5 1026.5,697.5 1027.5,697.5 1028.5,697.5 1029.5,697.5 1030.5,697.5 1031.5,697.5 1032.5,697.5 1033.5,697.5 1034.5,697.5" fill="none" stroke="#aaff00" stroke-width="1"/>
<polyline points="1036.5,697.5 1037.5,697.5 1038.5,697.5 1039.5,697.5 1040.5,697.5 1041.5,697.5 1042.5,697.5 1043.5,698.5 1044.5,697.5 1045.5,697.5 1046.5,696.5 1047.5,697.5 1048.5,697.5 1049.5,697.5 1050.5,697.5 1051.5,697.5 1052.5,697.5 1053.5,697.5 1054.5,697.5 1055.5,697.5 1056.5,696.5 1057.5,697.5 1058.5,697.5 1059.5,697.5 1060.5,697.5 1061.5,697.5 1062.5,697.5 1063.5,697.5 1064.5,698.5 1065.5,697.5 1066.5,697.5 1067.5,698.5 1068.5,697.5 1069.5,697.5 1070.5,697.5 1071.5,697.5 1072.5,697.5 1073.5,697.5 1074.5,696.5 1075.5,697.5 1076.5,698.5 1077.5,697.5 1078.5,697.5 1079.5,697.5 1080.5,697.5 1081.5,697.5 1082.5,697.5 1083.5,697.5 1084.5,697.5 1085.5,698.5 1086.5,696.5 1087.5,697.5 1088.5,697.5 1089.5,697.5 1089.5,696.5 1090.5,696.5 1091.5,696.5 1092.5,696.5 1093.5,696.5 1094.5,696.5 1095.5,696.5 1096.5,696.5" fill="none" stroke="#aaff00" stroke-width="1"/>
<polyline points="1098.5,697.5 1099.5,696.5" fill="none" stroke="#aaff00" stroke-width="1"/>
<polyline points="1101.5,696.5 1102.5,696.5 1103.5,696.5 1104.5,696.5 1105.5,696.5 1106.5,696.5 1107.5,696.5 1108.5,696.5 1109.5,696.5 1110.5,696.5 1111.5,696.5 1112.5,696.5 1113.5,697.5 1114.5,696.5 1115.5,696.5 1116.5,696.5 1117.5,696.5 1118.5,696.5 1119.5,696.5 1120.5,696.5 1121.5,695.5 1122.5,696.5 1123.5,696.5 1124.5,696.5 1125.5,696.5 1126.5,696.5 1127.5,696.5 1128.5,696.5 1129.5,696.5 1130.5,696.5 1131.5,696.5 1132.5,696.5 1133.5,696.5 1134.5,696.5 1135.5,696.5 1136.5,696.5 1137.5,696.5 1138.5,696.5 1139.5,695.5 1140.5,696.5 1141.5,696.5 1142.5,696.5 1143.5,696.5 1144.5,696.5 1145.5,696.5 1146.5,696.5 1147.5,696.5 1148.5,696.5 1149.5,696.5 1150.5,695.5 1151.5,696.5 1152.5,696.5 1153.5,697.5 1153.5,695.5 1154.5,695.5 1155.5,695.5 1156.5,695.5 1157.5,695.5 1158.5,695.5 1159.5,696.5 1160.5,695.5 1161.5,695.5 1162.5,695.5 1163.5,694.5 1164.5,695.5 1165.5,695.5 1166.5,695.5 1167.5,695.5 1168.5,695.5 1169.5,695.5 1170.5,695.5 1171.5,695.5 1172.5,695.5 1173.5,695.5 1174.5,695.5 1175.5,695.5 1176.5,696.5 1177.5,694.5 1178.5,696.5 1179.5,694.5 1180.5,695.5 1181.5,694.5 1182.5,695.5 1183.5,695.5 1184.5,695.5 1185.5,695.5 1186.5,695.5 1187.5,695.5 1188.5,694.5 1189.5,695.5 1190.5,695.5 1191.5,694.5 1192.5,695.5 1193.5,695.5 1194.5,695.5 1195.5,695.5 1196.5,695.5 1197.5,695.5 1198.5,695.5 1199.5,695.5 1200.5,695.5 1201.5,695.5 1202.5,694.5 1203.5,695.5 1204.5,695.5 1205.5,695.5 1206.5,695.5 1207.5,696.5 1208.5,695.5 1209.5,694.5 1210.5,695.5 1211.5,695.5 1212.5,694.5 1213.5,695.5 1214.5,695.5 1215.5,694.5 1216.5,695.5 1217.5,695.5 1218.5,696.5 1219.5,694.5 1220.5,695.5 1221.5,695.5 1222.5,695.5 1223.5,696.5 1224.5,695.5 1225.5,694.5 1226.5,695.5 1227.5,695.5 1228.5,695.5 1229.5,695.5 1230.5,694.5 1231.5,695.5 1232.5,696.5 1233.5,696.5 1234.5,695.5 1235.5,695.5" fill="none" stroke="#aaff00" stroke-width="1"/>
<polyline points="612.5,904.5 613.5,904.5 613.5,905.5 614.5,905.5 614.5,906.5 615.5,906.5 616.5,906.5 617.5,907.5 618.5,907.5 618.5,906.5 619.5,906.5 620.5,906.5 621.5,906.5 622.5,906.5 623.5,906.5 624.5,906.5 625.5,906.5 625.5,905.5 626.5,905.5 627.5,905.5 628.5,906.5 628.5,904.5 629.5,904.5 629.5,903.5 630.5,903.5 631.5,902.5 632.5,902.5 632.5,901.5 633.5,901.5 633.5,900.5 633.5,899.5 634.5,899.5 634.5,898.5 635.5,897.5 635.5,896.5 636.5,895.5 636.5,894.5 636.5,893.5 637.5,892.5 637.5,891.5 637.5,890.5 637.5,889.5 638.5,889.5 638.5,888.5 638.5,887.5 638.5,886.5 638.5,885.5 639.5,885.5 639.5,884.5 639.5,883.5 639.5,882.5 639.5,881.5 639.5,880.5 640.5,880.5 640.5,879.5 640.5,878.5 640.5,877.5 640.5,876.5 640.5,875.5 641.5,875.5 641.5,874.5 641.5,873.5 641.5,872.5 641.5,871.5 642.5,870.5 642.5,869.5 642.5,868.5 642.5,867.5 642.5,866.5 643.5,865.5 643.5,864.5 643.5,863.5 643.5,862.5 643.5,861.5 644.5,861.5 644.5,860.5 644.5,859.5 644.5,858.5 644.5,857.5 645.5,857.5 645.5,856.5 645.5,855.5 645.5,854.5 645.5,853.5 646.5,853.5 646.5,852.5 646.5,851.5 646.5,850.5 646.5,849.5 647.5,849.5 647.5,848.5 647.5,847.5 647.5,846.5 647.5,845.5 647.5,844.5 648.5,844.5 648.5,843.5 648.5,842.5 648.5,841.5 648.5,840.5 648.5,839.5 648.5,838.5 648.5,837.5 648.5,836.5 648.5,835.5 649.5,835.5 649.5,834.5 649.5,833.5 649.5,832.5 649.5,831.5 649.5,830.5 649.5,829.5 649.5,828.5 649.5,827.5 649.5,826.5 649.5,825.5 649.5,824.5 649.5,823.5 649.5,822.5 649.5,821.5 649.5,820.5 649.5,819.5 649.5,818.5 649.5,817.5 649.5,816.5 649.5,815.5 649.5,814.5 649.5,813.5 649.5,812.5 649.5,811.5 649.5,810.5 649.5,809.5 649.5,808.5 650.5,808.5 650.5,807.5 650.5,806.5 650.5,805.5 650.5,804.5 650.5,803.5 650.5,802.5 650.5,801.5 650.5,800.5 650.5,799.5 650.5,798.5 650.5,797.5 650.5,796.5 650.5,795.5 651.5,795.5 651.5,794.5 651.5,793.5 651.5,792.5 651.5,791.5 651.5,790.5 651.5,789.5 651.5,788.5 651.5,787.5 651.5,786.5 652.5,786.5 652.5,785.5 652.5,784.5 652.5,783.5 652.5,782.5 652.5,781.5 652.5,780.5 652.5,779.5 652.5,778.5 652.5,777.5 652.5,776.5 653.5,776.5 653.5,775.5 653.5,774.5 653.5,773.5 653.5,772.5 653.5,771.5 653.5,770.5 653.5,769.5 653.5,768.5 653.5,767.5 653.5,766.5 653.5,765.5 653.5,764.5 654.5,764.5 654.5,763.5 654.5,762.5 654.5,761.5 654.5,760.5 654.5,759.5 654.5,758.5 654.5,757.5 654.5,756.5 654.5,755.5 654.5,754.5 654.5,753.5 654.5,752.5 654.5,751.5 654.5,750.5 655.5,750.5 655.5,749.5 655.5,748.5 655.5,747.5 655.5,746.5 655.5,745.5 655.5,744.5 655.5,743.5 655.5,742.5 655.5,741.5 655.5,740.5 655.5,739.5 655.5,738.5 655.5,737.5 655.5,736.5 656.5,735.5 656.5,734.5 656.5,733.5 656.5,732.5 656.5,731.5 656.5,730.5 656.5,729.5 656.5,728.5 656.5,727.5 656.5,726.5 656.5,725.5 656.5,724.5 656.5,723.5 656.5,722.5 657.5,721.5 657.5,720.5 657.5,719.5 657.5,718.5 657.5,717.5 657.5,716.5 657.5,715.5 657.5,714.5 657.5,713.5 657.5,712.5 657.5,711.5 657.5,710.5 657.5,709.5 657.5,708.5 658.5,708.5 658.5,707.5 658.5,706.5 658.5,705.5 658.5,704.5 658.5,703.5 658.5,702.5 658.5,701.5 658.5,700.5 658.5,699.5 658.5,698.5 658.5,697.5 658.5,696.5 658.5,695.5 658.5,694.5 659.5,694.5 659.5,693.5 659.5,692.5 659.5,691.5 659.5,690.5 659.5,689.5 659.5,688.5 659.5,687.5 659.5,686.5 659.5,685.5 659.5,684.5 659.5,683.5 659.5,682.5 660.5,682.5 660.5,681.5 660.5,680.5 660.5,679.5 660.5,678.5 660.5,677.5 660.5,676.5 660.5,675.5 660.5,674.5 660.5,673.5 660.5,672.5 661.5,672.5 661.5,671.5 661.5,670.5 661.5,669.5 661.5,668.5 661.5,667.5 661.5,666.5 661.5,665.5 661.5,664.5 662.5,663.5 662.5,662.5 662.5,661.5 662.5,660.5 662.5,659.5 662.5,658.5 662.5,657.5 662.5,656.5 662.5,655.5 663.5,655.5 663.5,654.5 663.5,653.5 663.5,652.5 663.5,651.5 663.5,650.5 663.5,649.5 663.5,648.5 664.5,648.5 664.5,647.5 664.5,646.5 664.5,645.5 664.5,644.5 664.5,643.5 665.5,643.5 665.5,642.5 665.5,641.5 665.5,640.5 665.5,639.5 666.5,639.5 666.5,638.5 666.5,637.5 666.5,636.5 667.5,635.5 667.5,634.5 667.5,633.5 667.5,632.5 668.5,632.5 668.5,631.5 668.5,630.5 668.5,629.5 669.5,629.5 669.5,628.5 669.5,627.5 669.5,626.5 670.5,626.5 670.5,625.5 670.5,624.5 670.5,623.5 671.5,623.5 671.5,622.5 671.5,621.5 671.5,620.5 672.5,620.5 672.5,619.5 672.5,618.5 672.5,617.5 673.5,617.5 673.5,616.5 673.5,615.5 674.5,614.5 674.5,613.5 674.5,612.5 675.5,612.5 675.5,611.5 675.5,610.5 676.5,610.5 676.5,609.5 676.5,608.5 677.5,608.5 677.5,607.5 678.5,607.5" fill="none" stroke="#00ff00" stroke-width="1"/>
<polyline points="678.5,605.5 679.5,605.5 679.5,604.5 680.5,603.5 680.5,602.5 681.5,602.5 681.5,601.5 682.5,601.5 682.5,600.5 683.5,600.5 683.5,599.5 684.5,599.5 684.5,598.5 685.5,598.5 685.5,597.5 686.5,597.5" fill="none" stroke="#00ff00" stroke-width="1"/>
<polyline points="688.5,596.5 688.5,595.5 689.5,595.5 690.5,595.5 690.5,594.5" fill="none" stroke="#00ff00" stroke-width="1"/>
<polyline points="692.5,594.5 693.5,593.5 693.5,593.5 694.5,593.5 695.5,593.5 696.5,593.5 697.5,593.5 697.5,593.5 698.5,592.5 699.5,592.5 700.5,592.5 701.5,592.5 702.5,592.5 703.5,592.5 704.5,592.5 705.5,592.5 706.5,592.5 707.5,591.5 707.5,591.5 708.5,591.5 709.5,592.5 710.5,591.5 711.5,591.5 712.5,591.5 713.5,591.5 714.5,591.5 715.5,591.5 716.5,591.5 717.5,591.5 718.5,591.5 719.5,591.5 720.5,591.5 721.5,590.5 722.5,592.5 723.5,591.5 724.5,591.5 725.5,591.5 726.5,591.5 727.5,591.5 728.5,591.5 729.5,590.5 730.5,591.5 731.5,591.5 732.5,591.5 733.5,591.5 734.5,591.5 735.5,591.5 736.5,592.5 737.5,591.5 738.5,590.5 739.5,591.5 740.5,591.5 741.5,590.5 742.5,591.5 743.5,591.5 744.5,591.5 745.5,591.5 746.5,591.5 746.5,590.5 747.5,590.5 748.5,590.5 749.5,590.5 750.5,590.5 751.5,589.5 752.5,590.5 753.5,589.5 754.5,590.5 755.5,589.5 756.5,590.5 757.5,591.5 758.5,590.5 759.5,590.5 760.5,590.5 761.5,590.5 762.5,590.5 763.5,590.5 764.5,590.5 765.5,590.5 766.5,590.5 767.5,590.5 768.5,590.5 769.5,590.5 770.5,590.5 771.5,590.5 772.5,590.5 773.5,590.5 774.5,591.5 775.5,590.5 775.5,589.5 776.5,589.5 777.5,589.5 778.5,589.5 779.5,589.5 780.5,589.5 781.5,589.5 782.5,588.5 783.5,589.5 784.5,589.5 785.5,588.5 786.5,589.5 787.5,590.5 788.5,589.5 789.5,589.5 790.5,589.5 791.5,589.5" fill="none" stroke="#00ff00" stroke-width="1"/>
<polyline points="793.5,589.5 794.5,589.5 795.5,589.5 796.5,589.5 797.5,589.5 798.5,589.5 799.5,589.5 800.5,589.5 801.5,589.5 802.5,589.5 803.5,589.5 803.5,588.5 804.5,588.5 805.5,588.5 806.5,588.5 807.5,588.5 808.5,589.5 809.5,588.5 810.5,588.5 811.5,588.5 812.5,588.5 813.5,588.5 814.5,588.5 815.5,588.5 816.5,588.5 817.5,588.5 818.5,588.5 819.5,588.5 820.5,587.5 821.5,588.5 822.5,588.5 823.5,588.5 824.5,589.5 825.5,588.5 826.5,588.5 827.5,588.5 828.5,588.5 829.5,588.5 830.5,588.5 831.5,588.5 832.5,588.5 833.5,587.5 834.5,588.5 835.5,588.5 836.5,587.5 837.5,588.5 837.5,587.5 838.5,587.5 839.5,587.5 840.5,586.5 841.5,587.5" fill="none" stroke="#00ff00" stroke-width="1"/>
<polyline points="843.5,588.5 844.5,587.5 845.5,587.5 846.5,587.5 847.5,587.5 848.5,587.5 849.5,586.5 850.5,587.5 851.5,586.5 852.5,587.5" fill="none" stroke="#00ff00" stroke-width="1"/>
<polyline points="854.5,587.5 855.5,587.5 856.5,586.5 857.5,587.5 858.5,587.5 859.5,587.5 860.5,587.5 861.5,587.5 862.5,588.5 863.5,587.5 864.5,587.5 865.5,587.5 866.5,587.5 867.5,587.5 868.5,588.5 869.5,588.5 870.5,587.5 871.5,587.5 872.5,587.5 872.5,586.5 873.5,586.5 874.5,586.5 875.5,586.5 876.5,586.5 877.5,586.5 878.5,585.5 879.5,586.5 880.5,586.5 881.5,586.5 882.5,585.5 883.5,586.5 884.5,586.5 885.5,586.5 886.5,586.5 887.5,586.5 888.5,585.5 889.5,587.5 890.5,586.5 891.5,586.5 892.5,586.5 893.5,586.5 894.5,586.5 895.5,586.5 896.5,586.5 897.5,586.5 898.5,586.5 899.5,586.5 900.5,587.5 901.5,586.5 902.5,586.5 903.5,586.5 904.5,586.5 905.5,586.5 906.5,586.5 907.5,587.5 908.5,585.5 909.5,585.5 910.5,584.5 911.5,585.5 912.5,585.5 913.5,585.5 914.5,585.5 915.5,585.5 916.5,586.5 917.5,585.5 918.5,585.5 919.5,585.5 920.5,585.5 921.5,585.5 922.5,585.5 923.5,585.5 924.5,585.5 925.5,585.5 926.5,585.5 927.5,585.5 928.5,585.5 929.5,585.5 930.5,585.5 931.5,585.5 932.5,586.5 933.5,584.5 934.5,585.5 935.5,585.5 936.5,586.5 937.5,585.5 938.5,586.5 939.5,584.5 940.5,585.5 941.5,585.5 942.5,585.5 943.5,584.5 943.5,584.5 944.5,584.5 945.5,584.5 946.5,584.5 947.5,584.5 948.5,583.5 949.5,584.5 950.5,584.5 951.5,583.5 952.5,583.5 953.5,583.5 954.5,583.5 955.5,583.5" fill="none" stroke="#00ff00" stroke-width="1"/>
<polyline points="957.5,584.5 958.5,584.5 959.5,584.5 960.5,584.5 961.5,584.5 962.5,584.5 963.5,584.5 964.5,584.5 965.5,584.5 966.5,584.5 967.5,584.5 968.5,583.5 969.5,584.5 970.5,584.5 971.5,584.5 972.5,584.5 973.5,584.5 974.5,584.5 975.5,584.5 976.5,584.5 976.5,583.5 977.5,583.5 978.5,584.5 979.5,583.5 980.5,583.5 981.5,583.5 982.5,583.5 983.5,583.5 984.5,583.5 985.5,583.5 986.5,583.5 987.5,582.5 988.5,583.5 989.5,582.5 990.5,583.5 991.5,583.5 992.5,583.5 993.5,583.5 994.5,583.5 995.5,583.5 996.5,583.5 997.5,583.5 998.5,583.5 999.5,583.5 1000.5,583.5 1001.5,583.5 1002.5,583.5 1003.5,583.5 1004.5,584.5 1005.5,583.5 1006.5,583.5 1007.5,583.5 1008.5,583.5 1009.5,583.5 1010.5,584.5 1011.5,583.5 1012.5,583.5 1013.5,583.5 1014.5,583.5" fill="none" stroke="#00ff00" stroke-width="1"/>
<polyline points="1016.5,583.5 1017.5,582.5 1018.5,582.5 1019.5,582.5 1020.5,582.5 1021.5,583.5 1022.5,582.5 1023.5,582.5 1024.5,582.5 1025.5,582.5 1026.5,582.5 1027.5,582.5 1028.5,581.5 1029.5,583.5 1030.5,582.5 1031.5,582.5 1032.5,582.5 1033.5,582.5 1034.5,582.5 1035.5,583.5 1036.5,582.5 1037.5,583.5 1038.5,582.5 1039.5,582.5 1040.5,583.5 1041.5,582.5 1042.5,582.5 1043.5,582.5 1044.5,582.5 1045.5,582.5 1046.5,582.5 1047.5,582.5 1048.5,582.5 1049.5,582.5 1050.5,582.5 1051.5,582.5 1052.5,582.5 1053.5,582.5 1054.5,582.5 1055.5,581.5 1056.5,582.5 1057.5,582.5 1058.5,582.5 1059.5,582.5 1060.5,582.5 1061.5,582.5 1062.5,581.5 1063.5,581.5 1064.5,581.5 1065.5,581.5 1066.5,581.5 1067.5,581.5 1068.5,580.5 1069.5,581.5 1070.5,581.5 1071.5,582.5 1072.5,581.5 1073.5,581.5 1074.5,582.5 1075.5,581.5 1076.5,581.5 1077.5,581.5 1078.5,580.5 1079.5,581.5 1080.5,581.5 1081.5,581.5 1082.5,580.5 1083.5,581.5 1084.5,581.5 1085.5,581.5 1086.5,581.5 1087.5,581.5 1088.5,581.5 1089.5,581.5 1090.5,581.5 1091.5,581.5 1092.5,581.5 1093.5,581.5 1094.5,581.5 1095.5,581.5 1096.5,582.5 1097.5,581.5 1098.5,581.5 1099.5,581.5 1100.5,581.5 1101.5,581.5 1102.5,581.5 1103.5,581.5 1104.5,581.5 1105.5,580.5 1106.5,581.5 1107.5,581.5 1108.5,580.5 1108.5,580.5 1109.5,580.5 1110.5,580.5 1111.5,580.5 1112.5,581.5 1113.5,580.5 1114.5,580.5 1115.5,579.5 1116.5,580.5 1117.5,580.5 1118.5,580.5 1119.5,581.5 1120.5,580.5 1121.5,580.5 1122.5,580.5 1123.5,580.5 1124.5,579.5 1125.5,580.5 1126.5,580.5 1127.5,580.5 1128.5,580.5 1129.5,580.5 1130.5,580.5 1131.5,580.5 1132.5,580.5 1133.5,580.5 1134.5,580.5 1135.5,580.5 1136.5,580.5 1137.5,579.5 1138.5,580.5 1139.5,580.5 1140.5,580.5" fill="none" stroke="#00ff00" stroke-width="1"/>
<polyline points="612.5,904.5 613.5,905.5 614.5,906.5 615.5,907.5 616.5,907.5 617.5,907.5 618.5,907.5 619.5,908.5 620.5,907.5 621.5,907.5 621.5,907.5 622.5,906.5 623.5,906.5 624.5,906.5 625.5,906.5 625.5,905.5 626.5,905.5 627.5,905.5 627.5,904.5 628.5,905.5 629.5,904.5 629.5,903.5 630.5,903.5 630.5,902.5 631.5,902.5 631.5,901.5 632.5,901.5 632.5,900.5 633.5,899.5 633.5,898.5 634.5,897.5 634.5,896.5 634.5,895.5 635.5,895.5 635.5,894.5 635.5,893.5 635.5,892.5 636.5,892.5 636.5,891.5 636.5,890.5 636.5,889.5 636.5,888.5 637.5,888.5 637.5,887.5 637.5,886.5 637.5,885.5 637.5,884.5 638.5,884.5 638.5,883.5 638.5,882.5 638.5,881.5 638.5,880.5 638.5,879.5 639.5,879.5 639.5,878.5 639.5,877.5 639.5,876.5 639.5,875.5 639.5,874.5 640.5,874.5 640.5,873.5 640.5,872.5 640.5,871.5 640.5,870.5 640.5,869.5 640.5,868.5 641.5,868.5 641.5,867.5 641.5,866.5 641.5,865.5 641.5,864.5 641.5,863.5 641.5,862.5 642.5,861.5 642.5,860.5 642.5,859.5 642.5,858.5 642.5,857.5 642.5,856.5 642.5,855.5 642.5,854.5 643.5,854.5 643.5,853.5 643.5,852.5 643.5,851.5 643.5,850.5 643.5,849.5 643.5,848.5 643.5,847.5 643.5,846.5 643.5,845.5 643.5,844.5 644.5,844.5 644.5,843.5 644.5,842.5 644.5,841.5 644.5,840.5 644.5,839.5 644.5,838.5 644.5,837.5 644.5,836.5 644.5,835.5 644.5,834.5 644.5,833.5 645.5,833.5 645.5,832.5 645.5,831.5 645.5,830.5 645.5,829.5 645.5,828.5 645.5,827.5 645.5,826.5 645.5,825.5 645.5,824.5 645.5,823.5 645.5,822.5 645.5,821.5 645.5,820.5 646.5,820.5 646.5,819.5 646.5,818.5 646.5,817.5 646.5,816.5 646.5,815.5 646.5,814.5 646.5,813.5 646.5,812.5 646.5,811.5 646.5,810.5 646.5,809.5 646.5,808.5 646.5,807.5 646.5,806.5 646.5,805.5 647.5,805.5 647.5,804.5 647.5,803.5 647.5,802.5 647.5,801.5 647.5,800.5 647.5,799.5 647.5,798.5 647.5,797.5 647.5,796.5 647.5,795.5 647.5,794.5 647.5,793.5 647.5,792.5 647.5,791.5 647.5,790.5 647.5,789.5 647.5,788.5 647.5,787.5 647.5,786.5 647.5,785.5 647.5,784.5 648.5,784.5 648.5,783.5 648.5,782.5 648.5,781.5 648.5,780.5 648.5,779.5 648.5,778.5 648.5,777.5 648.5,776.5 648.5,775.5 648.5,774.5 648.5,773.5 648.5,772.5 648.5,771.5 648.5,770.5 648.5,769.5 648.5,768.5 648.5,767.5 649.5,767.5 649.5,766.5 649.5,765.5 649.5,764.5 649.5,763.5 649.5,762.5 649.5,761.5 649.5,760.5 649.5,759.5 649.5,758.5 649.5,757.5 649.5,756.5 649.5,755.5 649.5,754.5 650.5,753.5 650.5,752.5 650.5,751.5 650.5,750.5 650.5,749.5 650.5,748.5 650.5,747.5 650.5,746.5 650.5,745.5 650.5,744.5 650.5,743.5 650.5,742.5 650.5,741.5 650.5,740.5 651.5,740.5 651.5,739.5 651.5,738.5 651.5,737.5 651.5,736.5 651.5,735.5 651.5,734.5 651.5,733.5 651.5,732.5 651.5,731.5 651.5,730.5 651.5,729.5 651.5,728.5 651.5,727.5 651.5,726.5 651.5,725.5 651.5,724.5 652.5,724.5 652.5,723.5 652.5,722.5 652.5,721.5 652.5,720.5 652.5,719.5 652.5,718.5 652.5,717.5 652.5,716.5 652.5,715.5 652.5,714.5 652.5,713.5 652.5,712.5 652.5,711.5 652.5,710.5 652.5,709.5 652.5,708.5 652.5,707.5 652.5,706.5 652.5,705.5 652.5,704.5 652.5,703.5 652.5,702.5 652.5,701.5 652.5,700.5 652.5,699.5 653.5,699.5 653.5,698.5 653.5,697.5 653.5,696.5 653.5,695.5 653.5,694.5 653.5,693.5 653.5,692.5 653.5,691.5 653.5,690.5 653.5,689.5 653.5,688.5 653.5,687.5 653.5,686.5 653.5,685.5 653.5,684.5 653.5,683.5 653.5,682.5 653.5,681.5 653.5,680.5 653.5,679.5 653.5,678.5 654.5,678.5 654.5,677.5 654.5,676.5 654.5,675.5 654.5,674.5 654.5,673.5 654.5,672.5 654.5,671.5 654.5,670.5 654.5,669.5 654.5,668.5 654.5,667.5 654.5,666.5 654.5,665.5 654.5,664.5 654.5,663.5 654.5,662.5 655.5,661.5 655.5,660.5 655.5,659.5 655.5,658.5 655.5,657.5 655.5,656.5 655.5,655.5 655.5,654.5 655.5,653.5 655.5,652.5 655.5,651.5 655.5,650.5 655.5,649.5 655.5,648.5 655.5,647.5 655.5,646.5 656.5,646.5 656.5,645.5 656.5,644.5 656.5,643.5 656.5,642.5 656.5,641.5 656.5,640.5 656.5,639.5 656.5,638.5 656.5,637.5 656.5,636.5 656.5,635.5 656.5,634.5 656.5,633.5 656.5,632.5 656.5,631.5 657.5,631.5 657.5,630.5 657.5,629.5 657.5,628.5 657.5,627.5 657.5,626.5 657.5,625.5 657.5,624.5 657.5,623.5 657.5,622.5 657.5,621.5 657.5,620.5 657.5,619.5 657.5,618.5 658.5,617.5 658.5,616.5 658.5,615.5 658.5,614.5 658.5,613.5 658.5,612.5 658.5,611.5 658.5,610.5 658.5,609.5 658.5,608.5 658.5,607.5 658.5,606.5 658.5,605.5 658.5,604.5 659.5,604.5 659.5,603.5 659.5,602.5 659.5,601.5 659.5,600.5 659.5,599.5 659.5,598.5 659.5,597.5 659.5,596.5 659.5,595.5 659.5,594.5 659.5,593.5 659.5,592.5 660.5,591.5 660.5,590.5 660.5,589.5 660.5,588.5 660.5,587.5 660.5,586.5 660.5,585.5 660.5,584.5 660.5,583.5 660.5,582.5 660.5,581.5 660.5,580.5 660.5,579.5 660.5,578.5 661.5,578.5 661.5,577.5 661.5,576.5 661.5,575.5 661.5,574.5 661.5,573.5 661.5,572.5 661.5,571.5 661.5,570.5 661.5,569.5 661.5,568.5 661.5,567.5 662.5,567.5 662.5,566.5 662.5,565.5 662.5,564.5 662.5,563.5 662.5,562.5 662.5,561.5 662.5,560.5 662.5,559.5 662.5,558.5 663.5,558.5 663.5,557.5 663.5,556.5 663.5,555.5 663.5,554.5 663.5,553.5 663.5,552.5 663.5,551.5 664.5,551.5 664.5,550.5 664.5,549.5 664.5,548.5 664.5,547.5 664.5,546.5 664.5,545.5 665.5,545.5 665.5,544.5 665.5,543.5 665.5,542.5 665.5,541.5 665.5,540.5 665.5,539.5 666.5,539.5 666.5,538.5 666.5,537.5 666.5,536.5 666.5,535.5 666.5,534.5 667.5,534.5 667.5,533.5 667.5,532.5 667.5,531.5 667.5,530.5 667.5,529.5 668.5,529.5 668.5,528.5 668.5,527.5 668.5,526.5 668.5,525.5 668.5,524.5 669.5,524.5 669.5,523.5 669.5,522.5 669.5,521.5 669.5,520.5 670.5,520.5 670.5,519.5 670.5,518.5 670.5,517.5 670.5,516.5 670.5,515.5 671.5,515.5 671.5,514.5 671.5,513.5 671.5,512.5 671.5,511.5 672.5,511.5 672.5,510.5 672.5,509.5 672.5,508.5 673.5,508.5 673.5,507.5 673.5,506.5 673.5,505.5 674.5,505.5 674.5,504.5 674.5,503.5 674.5,502.5 675.5,502.5 675.5,501.5 675.5,500.5 675.5,499.5 676.5,499.5 676.5,498.5 676.5,497.5 677.5,497.5 677.5,496.5 677.5,495.5 678.5,495.5 678.5,494.5 679.5,494.5 679.5,493.5 679.5,492.5 680.5,492.5 680.5,491.5 681.5,491.5 681.5,490.5 682.5,490.5 682.5,489.5 683.5,489.5 683.5,488.5 684.5,487.5 684.5,486.5 685.5,486.5 685.5,485.5 686.5,485.5 686.5,484.5 687.5,484.5 687.5,483.5" fill="none" stroke="#00ffaa" stroke-width="1"/>
<polyline points="689.5,482.5 690.5,482.5 690.5,481.5 691.5,481.5 691.5,480.5 692.5,480.5 692.5,479.5 693.5,479.5 693.5,478.5 694.5,478.5 695.5,478.5 696.5,477.5 697.5,477.5 698.5,477.5 699.5,478.5 700.5,477.5 701.5,478.5 702.5,477.5 703.5,477.5 704.5,477.5 705.5,477.5 705.5,475.5 706.5,476.5 707.5,476.5 708.5,476.5 709.5,476.5 710.5,476.5 711.5,476.5 712.5,476.5 713.5,477.5 714.5,476.5 715.5,477.5 716.5,476.5 717.5,476.5 718.5,476.5 719.5,476.5 720.5,477.5" fill="none" stroke="#00ffaa" stroke-width="1"/>
<polyline points="722.5,476.5 723.5,476.5 724.5,476.5 725.5,476.5 726.5,475.5 727.5,476.5 728.5,476.5 728.5,475.5 729.5,475.5 730.5,475.5 731.5,475.5 732.5,475.5 733.5,475.5 734.5,475.5 735.5,476.5 736.5,474.5 737.5,475.5 738.5,475.5 739.5,475.5 740.5,475.5 741.5,474.5 742.5,474.5 743.5,475.5 744.5,475.5 745.5,475.5 746.5,474.5 747.5,475.5 748.5,475.5 749.5,475.5 750.5,476.5 751.5,475.5 752.5,475.5 753.5,475.5 754.5,475.5 755.5,475.5 756.5,475.5 757.5,475.5 758.5,475.5 759.5,475.5 760.5,474.5 761.5,475.5 762.5,474.5 763.5,474.5 763.5,474.5 764.5,474.5 765.5,474.5 766.5,474.5 767.5,474.5 768.5,474.5 769.5,475.5 770.5,474.5 771.5,474.5 772.5,474.5 773.5,474.5 774.5,474.5 775.5,474.5 776.5,473.5 777.5,474.5 778.5,474.5" fill="none" stroke="#00ffaa" stroke-width="1"/>
<polyline points="780.5,474.5 781.5,475.5 782.5,474.5 783.5,474.5 784.5,474.5 785.5,474.5 786.5,475.5 787.5,474.5 788.5,474.5 789.5,474.5 790.5,474.5 791.5,474.5 792.5,474.5 792.5,473.5 793.5,473.5 794.5,473.5 795.5,472.5 796.5,473.5 797.5,473.5 798.5,473.5 799.5,473.5 800.5,473.5 801.5,474.5 802.5,473.5 803.5,473.5 804.5,474.5 805.5,473.5 806.5,473.5 807.5,473.5 808.5,473.5 809.5,474.5 810.5,473.5 811.5,473.5 812.5,473.5 813.5,474.5 814.5,473.5 815.5,473.5 816.5,474.5 817.5,473.5 818.5,473.5 819.5,473.5 820.5,472.5 820.5,472.5 821.5,472.5 822.5,472.5 823.5,472.5 824.5,472.5 825.5,472.5" fill="none" stroke="#00ffaa" stroke-width="1"/>
<polyline points="827.5,472.5 828.5,472.5 829.5,472.5 830.5,472.5 831.5,472.5 832.5,472.5 833.5,472.5 834.5,472.5 835.5,472.5 836.5,473.5 837.5,472.5 838.5,472.5" fill="none" stroke="#00ffaa" stroke-width="1"/>
<polyline points="840.5,472.5 841.5,472.5 842.5,472.5 843.5,472.5 844.5,472.5 845.5,472.5 846.5,472.5 847.5,472.5 848.5,472.5 848.5,470.5 849.5,471.5 850.5,471.5 851.5,471.5 852.5,472.5 853.5,471.5 854.5,471.5 855.5,470.5 856.5,471.5 857.5,471.5 858.5,471.5 859.5,471.5 860.5,471.5 861.5,471.5 862.5,472.5 863.5,471.5 864.5,471.5 865.5,471.5 866.5,471.5 867.5,471.5 868.5,470.5 869.5,471.5 870.5,471.5 871.5,471.5 872.5,471.5 873.5,471.5 874.5,471.5 875.5,470.5 876.5,470.5 877.5,470.5 878.5,470.5" fill="none" stroke="#00ffaa" stroke-width="1"/>
<polyline points="880.5,470.5 881.5,471.5 882.5,470.5 883.5,470.5 884.5,470.5 885.5,470.5 886.5,470.5 887.5,469.5 888.5,470.5 889.5,470.5 890.5,470.5 891.5,469.5 892.5,469.5 893.5,470.5 894.5,470.5 895.5,470.5 896.5,470.5 897.5,470.5 898.5,470.5 899.5,470.5 900.5,471.5 901.5,470.5 902.5,470.5 903.5,470.5 904.5,470.5 905.5,471.5 905.5,469.5 906.5,469.5 907.5,469.5 908.5,469.5 909.5,469.5 910.5,469.5 911.5,469.5 912.5,469.5 913.5,469.5 914.5,469.5 915.5,469.5 916.5,469.5 917.5,469.5 918.5,469.5 919.5,469.5 920.5,469.5 921.5,469.5 922.5,468.5 923.5,469.5 924.5,469.5 925.5,468.5 926.5,469.5 927.5,469.5 928.5,469.5 929.5,469.5 930.5,468.5 931.5,469.5 932.5,469.5 933.5,469.5 933.5,468.5 934.5,468.5 935.5,468.5 936.5,468.5 937.5,468.5 938.5,468.5 939.5,468.5 940.5,468.5 941.5,468.5 942.5,468.5 943.5,468.5 944.5,468.5 945.5,468.5 946.5,468.5 947.5,468.5 948.5,468.5 949.5,469.5 950.5,468.5 951.5,468.5 952.5,468.5 953.5,468.5 954.5,468.5 955.5,468.5 956.5,468.5 957.5,468.5 958.5,468.5 959.5,468.5 960.5,468.5 961.5,468.5 962.5,467.5 963.5,467.5 964.5,467.5 965.5,467.5 966.5,467.5 967.5,467.5 968.5,466.5 969.5,467.5 970.5,467.5 971.5,467.5 972.5,467.5 973.5,467.5 974.5,466.5 975.5,467.5 976.5,467.5 977.5,467.5 978.5,467.5 979.5,466.5 980.5,467.5 981.5,468.5 982.5,467.5 983.5,467.5 984.5,467.5 985.5,467.5 986.5,467.5 987.5,466.5 988.5,467.5 989.5,467.5 990.5,467.5 990.5,466.5 991.5,466.5 992.5,466.5 993.5,467.5 994.5,466.5 995.5,466.5" fill="none" stroke="#00ffaa" stroke-width="1"/>
<polyline points="997.5,466.5 998.5,466.5 999.5,465.5 1000.5,466.5 1001.5,466.5 1002.5,466.5 1003.5,466.5 1004.5,467.5 1005.5,467.5 1006.5,466.5 1007.5,466.5 1008.5,466.5 1009.5,466.5 1010.5,466.5 1011.5,466.5 1012.5,466.5 1012.5,465.5 1013.5,465.5 1014.5,465.5 1015.5,465.5 1016.5,465.5 1017.5,465.5 1018.5,465.5 1019.5,466.5 1020.5,465.5 1021.5,465.5 1022.5,465.5 1023.5,465.5 1024.5,465.5 1025.5,465.5 1026.5,465.5 1027.5,465.5 1028.5,465.5 1029.5,465.5 1030.5,465.5 1030.5,464.5 1031.5,463.5 1032.5,464.5 1033.5,464.5 1034.5,464.5 1035.5,463.5 1036.5,464.5 1037.5,464.5 1038.5,464.5 1039.5,464.5 1040.5,464.5 1041.5,464.5 1042.5,463.5 1043.5,464.5 1044.5,464.5" fill="none" stroke="#00ffaa" stroke-width="1"/>
<polyline points="612.5,904.5 612.5,905.5 613.5,905.5 613.5,906.5 614.5,906.5 614.5,907.5 615.5,907.5 616.5,908.5 617.5,908.5 618.5,909.5 619.5,907.5 620.5,906.5 621.5,907.5 622.5,907.5 623.5,906.5 624.5,906.5 625.5,906.5 625.5,905.5 626.5,905.5 627.5,905.5 627.5,904.5 628.5,904.5 628.5,903.5 629.5,903.5 629.5,902.5 630.5,902.5 630.5,901.5 631.5,901.5 631.5,900.5 632.5,900.5 632.5,899.5 632.5,898.5 633.5,898.5 633.5,897.5 633.5,896.5 634.5,896.5 634.5,895.5 634.5,894.5 634.5,893.5 635.5,892.5 635.5,891.5 635.5,890.5 635.5,889.5 635.5,888.5 636.5,888.5 636.5,887.5 636.5,886.5 636.5,885.5 636.5,884.5 636.5,883.5 637.5,883.5 637.5,882.5 637.5,881.5 637.5,880.5 637.5,879.5 637.5,878.5 638.5,877.5 638.5,876.5 638.5,875.5 638.5,874.5 638.5,873.5 638.5,872.5 638.5,871.5 639.5,871.5 639.5,870.5 639.5,869.5 639.5,868.5 639.5,867.5 639.5,866.5 639.5,865.5 639.5,864.5 639.5,863.5 640.5,863.5 640.5,862.5 640.5,861.5 640.5,860.5 640.5,859.5 640.5,858.5 640.5,857.5 640.5,856.5 640.5,855.5 641.5,854.5 641.5,853.5 641.5,852.5 641.5,851.5 641.5,850.5 641.5,849.5 641.5,848.5 641.5,847.5 641.5,846.5 641.5,845.5 641.5,844.5 642.5,843.5 642.5,842.5 642.5,841.5 642.5,840.5 642.5,839.5 642.5,838.5 642.5,837.5 642.5,836.5 642.5,835.5 642.5,834.5 642.5,833.5 642.5,832.5 642.5,831.5 642.5,830.5 643.5,830.5 643.5,829.5 643.5,828.5 643.5,827.5 643.5,826.5 643.5,825.5 643.5,824.5 643.5,823.5 643.5,822.5 643.5,821.5 643.5,820.5 643.5,819.5 643.5,818.5 643.5,817.5 643.5,816.5 644.5,815.5 644.5,814.5 644.5,813.5 644.5,812.5 644.5,811.5 644.5,810.5 644.5,809.5 644.5,808.5 644.5,807.5 644.5,806.5 644.5,805.5 644.5,804.5 644.5,803.5 644.5,802.5 644.5,801.5 644.5,800.5 644.5,799.5 644.5,798.5 645.5,798.5 645.5,797.5 645.5,796.5 645.5,795.5 645.5,794.5 645.5,793.5 645.5,792.5 645.5,791.5 645.5,790.5 645.5,789.5 645.5,788.5 645.5,787.5 645.5,786.5 645.5,785.5 645.5,784.5 645.5,783.5 645.5,782.5 645.5,781.5 645.5,780.5 645.5,779.5 645.5,778.5 646.5,778.5 646.5,777.5 646.5,776.5 646.5,775.5 646.5,774.5 646.5,773.5 646.5,772.5 646.5,771.5 646.5,770.5 646.5,769.5 646.5,768.5 646.5,767.5 646.5,766.5 646.5,765.5 646.5,764.5 646.5,763.5 646.5,762.5 646.5,761.5 646.5,760.5 646.5,759.5 647.5,759.5 647.5,758.5 647.5,757.5 647.5,756.5 647.5,755.5 647.5,754.5 647.5,753.5 647.5,752.5 647.5,751.5 647.5,750.5 647.5,749.5 647.5,748.5 647.5,747.5 647.5,746.5 647.5,745.5 647.5,744.5 647.5,743.5 647.5,742.5 648.5,741.5 648.5,740.5 648.5,739.5 648.5,738.5 648.5,737.5 648.5,736.5 648.5,735.5 648.5,734.5 648.5,733.5 648.5,732.5 648.5,731.5 648.5,730.5 648.5,729.5 648.5,728.5 648.5,727.5 648.5,726.5 648.5,725.5 648.5,724.5 648.5,723.5 648.5,722.5 648.5,721.5 649.5,721.5 649.5,720.5 649.5,719.5 649.5,718.5 649.5,717.5 649.5,716.5 649.5,715.5 649.5,714.5 649.5,713.5 649.5,712.5 649.5,711.5 649.5,710.5 649.5,709.5 649.5,708.5 649.5,707.5 649.5,706.5 649.5,705.5 649.5,704.5 649.5,703.5 649.5,702.5 649.5,701.5 649.5,700.5 649.5,699.5 649.5,698.5 649.5,697.5 649.5,696.5 650.5,696.5 650.5,695.5 650.5,694.5 650.5,693.5 650.5,692.5 650.5,691.5 650.5,690.5 650.5,689.5 650.5,688.5 650.5,687.5 650.5,686.5 650.5,685.5 650.5,684.5 650.5,683.5 650.5,682.5 650.5,681.5 650.5,680.5 650.5,679.5 650.5,678.5 650.5,677.5 650.5,676.5 650.5,675.5 650.5,674.5 650.5,673.5 650.5,672.5 650.5,671.5 651.5,671.5 651.5,670.5 651.5,669.5 651.5,668.5 651.5,667.5 651.5,666.5 651.5,665.5 651.5,664.5 651.5,663.5 651.5,662.5 651.5,661.5 651.5,660.5 651.5,659.5 651.5,658.5 651.5,657.5 651.5,656.5 651.5,655.5 651.5,654.5 651.5,653.5 651.5,652.5 651.5,651.5 651.5,650.5 651.5,649.5 651.5,648.5 652.5,647.5 652.5,646.5 652.5,645.5 652.5,644.5 652.5,643.5 652.5,642.5 652.5,641.5 652.5,640.5 652.5,639.5 652.5,638.5 652.5,637.5 652.5,636.5 652.5,635.5 652.5,634.5 652.5,633.5 652.5,632.5 652.5,631.5 652.5,630.5 652.5,629.5 652.5,628.5 652.5,627.5 653.5,627.5 653.5,626.5 653.5,625.5 653.5,624.5 653.5,623.5 653.5,622.5 653.5,621.5 653.5,620.5 653.5,619.5 653.5,618.5 653.5,617.5 653.5,616.5 653.5,615.5 653.5,614.5 653.5,613.5 653.5,612.5 653.5,611.5 653.5,610.5 653.5,609.5 654.5,608.5 654.5,607.5 654.5,606.5 654.5,605.5 654.5,604.5 654.5,603.5 654.5,602.5 654.5,601.5 654.5,600.5 654.5,599.5 654.5,598.5 654.5,597.5 654.5,596.5 654.5,595.5 654.5,594.5 654.5,593.5 654.5,592.5 654.5,591.5 654.5,590.5 654.5,589.5 655.5,589.5 655.5,588.5 655.5,587.5 655.5,586.5 655.5,585.5 655.5,584.5 655.5,583.5 655.5,582.5 655.5,581.5 655.5,580.5 655.5,579.5 655.5,578.5 655.5,577.5 655.5,576.5 655.5,575.5 655.5,574.5 655.5,573.5 655.5,572.5 655.5,571.5 655.5,570.5 655.5,569.5 656.5,569.5 656.5,568.5 656.5,567.5 656.5,566.5 656.5,565.5 656.5,564.5 656.5,563.5 656.5,562.5 656.5,561.5 656.5,560.5 656.5,559.5 656.5,558.5 656.5,557.5 656.5,556.5 656.5,555.5 656.5,554.5 656.5,553.5 656.5,552.5 656.5,551.5 657.5,551.5 657.5,550.5 657.5,549.5 657.5,548.5 657.5,547.5 657.5,546.5 657.5,545.5 657.5,544.5 657.5,543.5 657.5,542.5 657.5,541.5 657.5,540.5 657.5,539.5 657.5,538.5 657.5,537.5 657.5,536.5 658.5,535.5 658.5,534.5 658.5,533.5 658.5,532.5 658.5,531.5 658.5,530.5 658.5,529.5 658.5,528.5 658.5,527.5 658.5,526.5 658.5,525.5 658.5,524.5 658.5,523.5 658.5,522.5 658.5,521.5 658.5,520.5 659.5,520.5 659.5,519.5 659.5,518.5 659.5,517.5 659.5,516.5 659.5,515.5 659.5,514.5 659.5,513.5 659.5,512.5 659.5,511.5 659.5,510.5 659.5,509.5 659.5,508.5 659.5,507.5 659.5,506.5 659.5,505.5 659.5,504.5 659.5,503.5 659.5,502.5 659.5,501.5 659.5,500.5 659.5,499.5 659.5,498.5 659.5,497.5 659.5,496.5 659.5,495.5 659.5,494.5 660.5,494.5 660.5,493.5 660.5,492.5 660.5,491.5 660.5,490.5 660.5,489.5 660.5,488.5 660.5,487.5 660.5,486.5 660.5,485.5 660.5,484.5 661.5,484.5 661.5,483.5 661.5,482.5 661.5,481.5 661.5,480.5 661.5,479.5 661.5,478.5 661.5,477.5 661.5,476.5 661.5,475.5 661.5,474.5 662.5,474.5 662.5,473.5 662.5,472.5 662.5,471.5 662.5,470.5 662.5,469.5 662.5,468.5 662.5,467.5 662.5,466.5 662.5,465.5 662.5,464.5 662.5,463.5 662.5,462.5 663.5,462.5 663.5,461.5 663.5,460.5 663.5,459.5 663.5,458.5 663.5,457.5 663.5,456.5 663.5,455.5 663.5,454.5 663.5,453.5 663.5,452.5 663.5,451.5 664.5,451.5 664.5,450.5 664.5,449.5 664.5,448.5 664.5,447.5 664.5,446.5 664.5,445.5 664.5,444.5 664.5,443.5 665.5,443.5 665.5,442.5 665.5,441.5 665.5,440.5 665.5,439.5 665.5,438.5 665.5,437.5 665.5,436.5 665.5,435.5 666.5,434.5 666.5,433.5 666.5,432.5 666.5,431.5 666.5,430.5 666.5,429.5 666.5,428.5 666.5,427.5 667.5,427.5 667.5,426.5 667.5,425.5 667.5,424.5 667.5,423.5 667.5,422.5 667.5,421.5 667.5,420.5 668.5,420.5 668.5,419.5 668.5,418.5 668.5,417.5 668.5,416.5 668.5,415.5 668.5,414.5 669.5,414.5 669.5,413.5 669.5,412.5 669.5,411.5 669.5,410.5 669.5,409.5 670.5,409.5 670.5,408.5 670.5,407.5 670.5,406.5 670.5,405.5 671.5,405.5 671.5,404.5 671.5,403.5 671.5,402.5 671.5,401.5 671.5,400.5 672.5,400.5 672.5,399.5 672.5,398.5 672.5,397.5 673.5,396.5 673.5,395.5 673.5,394.5 673.5,393.5 674.5,393.5 674.5,392.5 674.5,391.5 674.5,390.5 675.5,390.5 675.5,389.5 675.5,388.5 675.5,387.5 676.5,387.5 676.5,386.5 676.5,385.5 676.5,384.5 677.5,384.5 677.5,383.5 677.5,382.5 678.5,382.5 678.5,381.5 678.5,380.5 679.5,379.5 679.5,378.5 680.5,378.5 680.5,377.5 680.5,376.5 681.5,376.5 681.5,375.5 682.5,374.5 682.5,373.5 683.5,373.5 683.5,372.5 684.5,372.5 684.5,371.5 685.5,371.5 686.5,370.5 687.5,370.5 687.5,369.5 688.5,369.5 688.5,368.5 689.5,368.5 690.5,368.5 690.5,367.5 691.5,367.5 691.5,366.5 692.5,366.5 693.5,366.5 693.5,365.5 694.5,365.5 694.5,364.5 695.5,364.5 696.5,364.5 696.5,363.5 697.5,363.5 698.5,363.5 698.5,362.5 699.5,362.5 700.5,362.5 701.5,362.5 702.5,362.5 703.5,363.5 704.5,363.5 704.5,361.5 705.5,361.5 706.5,361.5 707.5,362.5 708.5,361.5 709.5,361.5 710.5,361.5 711.5,361.5 712.5,362.5 713.5,361.5 714.5,361.5 715.5,361.5 716.5,361.5 717.5,361.5 718.5,362.5 719.5,360.5 720.5,359.5 721.5,360.5 722.5,359.5 723.5,361.5 724.5,360.5 725.5,360.5 726.5,360.5 727.5,360.5 728.5,360.5 729.5,360.5 730.5,360.5 731.5,360.5 732.5,360.5 733.5,361.5 734.5,360.5 735.5,360.5 736.5,360.5 737.5,360.5 738.5,360.5 739.5,360.5 740.5,360.5 741.5,361.5 742.5,359.5 742.5,359.5 743.5,359.5 744.5,360.5 745.5,359.5 746.5,359.5 747.5,359.5 748.5,359.5 749.5,359.5 750.5,359.5 751.5,359.5 752.5,359.5 753.5,359.5 754.5,360.5 755.5,359.5 755.5,358.5 756.5,358.5 757.5,357.5 758.5,359.5 759.5,358.5 760.5,357.5 761.5,358.5 762.5,359.5 763.5,358.5 764.5,358.5 765.5,358.5 766.5,358.5 767.5,358.5 768.5,358.5 769.5,357.5 770.5,356.5 771.5,357.5 772.5,357.5 773.5,357.5 774.5,357.5 775.5,357.5 776.5,357.5 777.5,356.5 778.5,357.5 779.5,358.5 780.5,357.5 781.5,357.5 782.5,357.5 783.5,357.5 784.5,358.5 785.5,357.5 786.5,357.5 787.5,357.5 788.5,357.5 789.5,357.5 790.5,357.5 790.5,357.5 791.5,357.5 792.5,356.5 793.5,356.5 794.5,356.5 795.5,356.5 796.5,356.5 797.5,356.5 798.5,356.5 799.5,356.5 800.5,356.5 801.5,356.5 802.5,356.5 803.5,357.5 804.5,357.5 805.5,356.5 806.5,357.5 807.5,356.5 808.5,355.5 809.5,356.5 810.5,356.5 811.5,356.5 812.5,356.5 813.5,356.5 814.5,356.5 815.5,356.5 815.5,355.5 816.5,356.5 817.5,355.5 818.5,355.5 819.5,354.5 820.5,356.5 821.5,355.5 822.5,355.5 823.5,355.5 824.5,355.5 825.5,355.5 826.5,355.5 827.5,355.5 828.5,355.5 829.5,355.5" fill="none" stroke="#00aaff" stroke-width="1"/>
<polyline points="831.5,355.5 832.5,356.5 833.5,355.5 834.5,355.5 835.5,355.5 836.5,355.5 837.5,355.5 837.5,354.5 838.5,355.5 839.5,354.5 840.5,354.5 841.5,354.5 842.5,354.5 843.5,354.5" fill="none" stroke="#00aaff" stroke-width="1"/>
<polyline points="845.5,354.5 846.5,354.5 847.5,354.5 848.5,354.5 849.5,354.5 850.5,355.5 851.5,354.5 852.5,353.5 853.5,354.5 854.5,354.5 855.5,354.5 856.5,354.5 857.5,354.5 858.5,354.5 858.5,352.5 859.5,353.5 860.5,354.5 861.5,353.5 862.5,353.5 863.5,353.5" fill="none" stroke="#00aaff" stroke-width="1"/>
<polyline points="865.5,352.5 866.5,353.5 867.5,353.5 868.5,353.5 869.5,353.5 870.5,352.5 871.5,353.5 872.5,353.5 873.5,353.5 874.5,353.5 875.5,353.5 876.5,353.5 877.5,353.5 878.5,352.5 879.5,352.5 880.5,352.5 881.5,352.5 882.5,353.5 883.5,352.5 884.5,352.5 885.5,352.5 886.5,352.5 887.5,352.5 888.5,352.5 889.5,352.5 890.5,352.5 891.5,352.5 892.5,352.5 893.5,351.5 894.5,352.5 895.5,352.5 896.5,352.5 897.5,352.5 897.5,350.5 898.5,351.5 899.5,351.5 900.5,351.5 901.5,350.5 902.5,351.5 903.5,351.5 904.5,351.5 905.5,351.5 906.5,350.5 907.5,352.5 908.5,351.5 909.5,352.5 910.5,351.5 911.5,351.5 912.5,351.5 913.5,351.5 914.5,351.5 915.5,351.5 916.5,352.5 917.5,351.5 917.5,350.5 918.5,350.5 919.5,350.5 920.5,351.5 921.5,350.5 922.5,350.5 923.5,350.5 924.5,350.5 925.5,350.5 926.5,350.5 927.5,350.5 928.5,351.5 929.5,350.5 930.5,350.5 931.5,350.5 932.5,350.5 933.5,350.5 934.5,350.5 935.5,350.5 936.5,350.5 937.5,350.5 937.5,349.5 938.5,349.5 939.5,349.5 940.5,349.5 941.5,350.5 942.5,349.5 943.5,349.5 944.5,349.5" fill="none" stroke="#00aaff" stroke-width="1"/>
<polyline points="946.5,350.5 947.5,349.5 948.5,349.5 949.5,349.5 950.5,349.5" fill="none" stroke="#00aaff" stroke-width="1"/>
<polyline points="612.5,904.5 612.5,905.5 613.5,905.5 613.5,906.5 614.5,906.5 614.5,907.5 615.5,907.5 615.5,908.5 616.5,908.5 617.5,909.5 618.5,908.5 619.5,908.5 620.5,909.5 621.5,908.5 621.5,907.5 622.5,907.5 623.5,907.5 624.5,907.5 625.5,906.5 625.5,905.5 626.5,905.5 627.5,904.5 628.5,903.5 628.5,902.5 629.5,902.5 629.5,901.5 630.5,901.5 630.5,900.5 630.5,899.5 631.5,899.5 631.5,898.5 631.5,897.5 632.5,896.5 632.5,895.5 632.5,894.5 632.5,893.5 633.5,893.5 633.5,892.5 633.5,891.5 633.5,890.5 633.5,889.5 634.5,889.5 634.5,888.5 634.5,887.5 634.5,886.5 634.5,885.5 634.5,884.5 635.5,884.5 635.5,883.5 635.5,882.5 635.5,881.5 635.5,880.5 635.5,879.5 636.5,879.5 636.5,878.5 636.5,877.5 636.5,876.5 636.5,875.5 636.5,874.5 637.5,874.5 637.5,873.5 637.5,872.5 637.5,871.5 637.5,870.5 637.5,869.5 637.5,868.5 638.5,867.5 638.5,866.5 638.5,865.5 638.5,864.5 638.5,863.5 638.5,862.5 638.5,861.5 638.5,860.5 639.5,860.5 639.5,859.5 639.5,858.5 639.5,857.5 639.5,856.5 639.5,855.5 639.5,854.5 639.5,853.5 639.5,852.5 639.5,851.5 639.5,850.5 639.5,849.5 639.5,848.5 640.5,848.5 640.5,847.5 640.5,846.5 640.5,845.5 640.5,844.5 640.5,843.5 640.5,842.5 640.5,841.5 640.5,840.5 640.5,839.5 640.5,838.5 640.5,837.5 640.5,836.5 640.5,835.5 640.5,834.5 640.5,833.5 640.5,832.5 640.5,831.5 640.5,830.5 640.5,829.5 641.5,829.5 641.5,828.5 641.5,827.5 641.5,826.5 641.5,825.5 641.5,824.5 641.5,823.5 641.5,822.5 641.5,821.5 641.5,820.5 641.5,819.5 641.5,818.5 641.5,817.5 641.5,816.5 641.5,815.5 641.5,814.5 641.5,813.5 641.5,812.5 641.5,811.5 641.5,810.5 642.5,810.5 642.5,809.5 642.5,808.5 642.5,807.5 642.5,806.5 642.5,805.5 642.5,804.5 642.5,803.5 642.5,802.5 642.5,801.5 642.5,800.5 642.5,799.5 642.5,798.5 642.5,797.5 642.5,796.5 642.5,795.5 642.5,794.5 642.5,793.5 642.5,792.5 642.5,791.5 643.5,790.5 643.5,789.5 643.5,788.5 643.5,787.5 643.5,786.5 643.5,785.5 643.5,784.5 643.5,783.5 643.5,782.5 643.5,781.5 643.5,780.5 643.5,779.5 643.5,778.5 643.5,777.5 643.5,776.5 643.5,775.5 643.5,774.5 643.5,773.5 643.5,772.5 643.5,771.5 644.5,771.5 644.5,770.5 644.5,769.5 644.5,768.5 644.5,767.5 644.5,766.5 644.5,765.5 644.5,764.5 644.5,763.5 644.5,762.5 644.5,761.5 644.5,760.5 644.5,759.5 644.5,758.5 644.5,757.5 644.5,756.5 644.5,755.5 644.5,754.5 644.5,753.5 645.5,753.5 645.5,752.5 645.5,751.5 645.5,750.5 645.5,749.5 645.5,748.5 645.5,747.5 645.5,746.5 645.5,745.5 645.5,744.5 645.5,743.5 645.5,742.5 645.5,741.5 645.5,740.5 645.5,739.5 645.5,738.5 645.5,737.5 645.5,736.5 645.5,735.5 646.5,735.5 646.5,734.5 646.5,733.5 646.5,732.5 646.5,731.5 646.5,730.5 646.5,729.5 646.5,728.5 646.5,727.5 646.5,726.5 646.5,725.5 646.5,724.5 646.5,723.5 646.5,722.5 646.5,721.5 646.5,720.5 646.5,719.5 646.5,718.5 646.5,717.5 646.5,716.5 646.5,715.5 646.5,714.5 646.5,713.5 646.5,712.5 647.5,712.5 647.5,711.5 647.5,710.5 647.5,709.5 647.5,708.5 647.5,707.5 647.5,706.5 647.5,705.5 647.5,704.5 647.5,703.5 647.5,702.5 647.5,701.5 647.5,700.5 647.5,699.5 647.5,698.5 647.5,697.5 647.5,696.5 647.5,695.5 647.5,694.5 647.5,693.5 647.5,692.5 647.5,691.5 647.5,690.5 647.5,689.5 647.5,688.5 647.5,687.5 647.5,686.5 648.5,686.5 648.5,685.5 648.5,684.5 648.5,683.5 648.5,682.5 648.5,681.5 648.5,680.5 648.5,679.5 648.5,678.5 648.5,677.5 648.5,676.5 648.5,675.5 648.5,674.5 648.5,673.5 648.5,672.5 648.5,671.5 648.5,670.5 648.5,669.5 648.5,668.5 648.5,667.5 648.5,666.5 648.5,665.5 648.5,664.5 648.5,663.5 648.5,662.5 649.5,661.5 649.5,660.5 649.5,659.5 649.5,658.5 649.5,657.5 649.5,656.5 649.5,655.5 649.5,654.5 649.5,653.5 649.5,652.5 649.5,651.5 649.5,650.5 649.5,649.5 649.5,648.5 649.5,647.5 649.5,646.5 649.5,645.5 649.5,644.5 649.5,643.5 649.5,642.5 649.5,641.5 649.5,640.5 649.5,639.5 649.5,638.5 649.5,637.5 649.5,636.5 649.5,635.5 649.5,634.5 650.5,634.5 650.5,633.5 650.5,632.5 650.5,631.5 650.5,630.5 650.5,629.5 650.5,628.5 650.5,627.5 650.5,626.5 650.5,625.5 650.5,624.5 650.5,623.5 650.5,622.5 650.5,621.5 650.5,620.5 650.5,619.5 650.5,618.5 650.5,617.5 650.5,616.5 650.5,615.5 650.5,614.5 650.5,613.5 650.5,612.5 650.5,611.5 650.5,610.5 650.5,609.5 650.5,608.5 650.5,607.5 650.5,606.5 650.5,605.5 650.5,604.5 650.5,603.5 650.5,602.5 650.5,601.5 650.5,600.5 650.5,599.5 651.5,599.5 651.5,598.5 651.5,597.5 651.5,596.5 651.5,595.5 651.5,594.5 651.5,593.5 651.5,592.5 651.5,591.5 651.5,590.5 651.5,589.5 651.5,588.5 651.5,587.5 651.5,586.5 651.5,585.5 651.5,584.5 651.5,583.5 651.5,582.5 651.5,581.5 651.5,580.5 651.5,579.5 651.5,578.5 651.5,577.5 651.5,576.5 651.5,575.5 651.5,574.5 651.5,573.5 652.5,573.5 652.5,572.5 652.5,571.5 652.5,570.5 652.5,569.5 652.5,568.5 652.5,567.5 652.5,566.5 652.5,565.5 652.5,564.5 652.5,563.5 652.5,562.5 652.5,561.5 652.5,560.5 652.5,559.5 652.5,558.5 652.5,557.5 652.5,556.5 652.5,555.5 652.5,554.5 652.5,553.5 652.5,552.5 652.5,551.5 652.5,550.5 652.5,549.5 652.5,548.5 653.5,548.5 653.5,547.5 653.5,546.5 653.5,545.5 653.5,544.5 653.5,543.5 653.5,542.5 653.5,541.5 653.5,540.5 653.5,539.5 653.5,538.5 653.5,537.5 653.5,536.5 653.5,535.5 653.5,534.5 653.5,533.5 653.5,532.5 653.5,531.5 653.5,530.5 653.5,529.5 653.5,528.5 653.5,527.5 653.5,526.5 653.5,525.5 653.5,524.5 653.5,523.5 653.5,522.5 653.5,521.5 654.5,521.5 654.5,520.5 654.5,519.5 654.5,518.5 654.5,517.5 654.5,516.5 654.5,515.5 654.5,514.5 654.5,513.5 654.5,512.5 654.5,511.5 654.5,510.5 654.5,509.5 654.5,508.5 654.5,507.5 654.5,506.5 654.5,505.5 654.5,504.5 654.5,503.5 654.5,502.5 654.5,501.5 654.5,500.5 655.5,500.5 655.5,499.5 655.5,498.5 655.5,497.5 655.5,496.5 655.5,495.5 655.5,494.5 655.5,493.5 655.5,492.5 655.5,491.5 655.5,490.5 655.5,489.5 655.5,488.5 655.5,487.5 655.5,486.5 655.5,485.5 655.5,484.5 655.5,483.5 655.5,482.5 656.5,482.5 656.5,481.5 656.5,480.5 656.5,479.5 656.5,478.5 656.5,477.5 656.5,476.5 656.5,475.5 656.5,474.5 656.5,473.5 656.5,472.5 656.5,471.5 656.5,470.5 656.5,469.5 656.5,468.5 656.5,467.5 656.5,466.5 656.5,465.5 656.5,464.5 657.5,463.5 657.5,462.5 657.5,461.5 657.5,460.5 657.5,459.5 657.5,458.5 657.5,457.5 657.5,456.5 657.5,455.5 657.5,454.5 657.5,453.5 657.5,452.5 657.5,451.5 657.5,450.5 657.5,449.5 657.5,448.5 657.5,447.5 657.5,446.5 657.5,445.5 657.5,444.5 658.5,444.5 658.5,443.5 658.5,442.5 658.5,441.5 658.5,440.5 658.5,439.5 658.5,438.5 658.5,437.5 658.5,436.5 658.5,435.5 658.5,434.5 658.5,433.5 658.5,432.5 658.5,431.5 658.5,430.5 658.5,429.5 658.5,428.5 658.5,427.5 658.5,426.5 658.5,425.5 659.5,425.5 659.5,424.5 659.5,423.5 659.5,422.5 659.5,421.5 659.5,420.5 659.5,419.5 659.5,418.5 659.5,417.5 659.5,416.5 659.5,415.5 659.5,414.5 659.5,413.5 659.5,412.5 659.5,411.5 659.5,410.5 659.5,409.5 659.5,408.5 659.5,407.5 659.5,406.5 659.5,405.5 660.5,405.5 660.5,404.5 660.5,403.5 660.5,402.5 660.5,401.5 660.5,400.5 660.5,399.5 660.5,398.5 660.5,397.5 660.5,396.5 660.5,395.5 660.5,394.5 660.5,393.5 660.5,392.5 660.5,391.5 660.5,390.5 660.5,389.5 660.5,388.5 660.5,387.5 661.5,387.5 661.5,386.5 661.5,385.5 661.5,384.5 661.5,383.5 661.5,382.5 661.5,381.5 661.5,380.5 661.5,379.5 661.5,378.5 661.5,377.5 661.5,376.5 661.5,375.5 662.5,375.5 662.5,374.5 662.5,373.5 662.5,372.5 662.5,371.5 662.5,370.5 662.5,369.5 662.5,368.5 662.5,367.5 662.5,366.5 662.5,365.5 663.5,365.5 663.5,364.5 663.5,363.5 663.5,362.5 663.5,361.5 663.5,360.5 663.5,359.5 663.5,358.5 663.5,357.5 664.5,357.5 664.5,356.5 664.5,355.5 664.5,354.5 664.5,353.5 664.5,352.5 664.5,351.5 664.5,350.5 664.5,349.5 664.5,348.5 665.5,348.5 665.5,347.5 665.5,346.5 665.5,345.5 665.5,344.5 665.5,343.5 665.5,342.5 665.5,341.5 665.5,340.5 665.5,339.5 665.5,338.5 666.5,337.5 666.5,336.5 666.5,335.5 666.5,334.5 666.5,333.5 666.5,332.5 666.5,331.5 666.5,330.5 666.5,329.5 666.5,328.5 666.5,327.5 666.5,326.5 667.5,326.5 667.5,325.5 667.5,324.5 667.5,323.5 667.5,322.5 667.5,321.5 667.5,320.5 667.5,319.5 667.5,318.5 668.5,317.5 668.5,316.5 668.5,315.5 668.5,314.5 668.5,313.5 668.5,312.5 668.5,311.5 669.5,311.5 669.5,310.5 669.5,309.5 669.5,308.5 669.5,307.5 669.5,306.5 670.5,305.5 670.5,304.5 670.5,303.5 670.5,302.5 670.5,301.5 670.5,300.5 671.5,300.5 671.5,299.5 671.5,298.5 671.5,297.5 671.5,296.5 671.5,295.5 672.5,294.5 672.5,293.5 672.5,292.5 672.5,291.5 672.5,290.5 673.5,290.5 673.5,289.5 673.5,288.5 673.5,287.5 673.5,286.5 673.5,285.5 674.5,285.5 674.5,284.5 674.5,283.5 674.5,282.5 674.5,281.5 675.5,281.5 675.5,280.5 675.5,279.5 675.5,278.5 675.5,277.5 676.5,277.5 676.5,276.5 676.5,275.5 676.5,274.5 677.5,273.5 677.5,272.5 677.5,271.5 678.5,271.5 678.5,270.5 678.5,269.5 679.5,269.5 679.5,268.5 679.5,267.5 680.5,267.5 680.5,266.5 680.5,265.5 681.5,265.5 681.5,264.5 682.5,263.5 682.5,262.5 683.5,262.5 683.5,261.5 683.5,260.5 684.5,260.5 684.5,259.5 685.5,259.5 685.5,258.5 685.5,257.5 686.5,257.5 686.5,256.5 687.5,256.5 687.5,255.5 687.5,254.5 688.5,254.5 688.5,253.5 689.5,253.5 689.5,252.5 690.5,252.5 690.5,251.5 691.5,251.5 692.5,250.5 693.5,251.5 694.5,249.5 695.5,249.5 696.5,249.5 696.5,248.5 697.5,248.5 698.5,248.5 699.5,248.5 699.5,248.5 700.5,248.5 701.5,247.5 702.5,246.5 703.5,247.5 703.5,246.5 704.5,246.5 705.5,246.5 706.5,246.5 706.5,246.5 707.5,245.5 708.5,245.5 709.5,245.5 710.5,245.5 711.5,245.5 712.5,245.5 713.5,245.5 714.5,245.5 715.5,245.5" fill="none" stroke="#0000ff" stroke-width="1"/>
<polyline points="717.5,245.5 718.5,245.5 719.5,246.5 720.5,245.5 721.5,245.5 722.5,244.5 723.5,244.5 724.5,244.5 725.5,244.5" fill="none" stroke="#0000ff" stroke-width="1"/>
<polyline points="727.5,244.5 728.5,245.5 729.5,244.5" fill="none" stroke="#0000ff" stroke-width="1"/>
<polyline points="731.5,244.5 732.5,243.5 733.5,244.5 734.5,245.5 735.5,244.5 736.5,245.5 737.5,244.5 738.5,244.5 739.5,244.5 740.5,244.5" fill="none" stroke="#0000ff" stroke-width="1"/>
<polyline points="741.5,242.5 742.5,242.5 743.5,243.5 744.5,243.5 745.5,243.5 746.5,244.5 747.5,243.5 748.5,244.5 749.5,243.5 750.5,243.5 751.5,242.5 752.5,243.5 753.5,243.5 754.5,242.5 755.5,243.5 756.5,243.5 757.5,244.5 758.5,243.5 759.5,243.5 759.5,242.5 760.5,242.5 761.5,242.5 762.5,242.5 763.5,242.5 764.5,242.5 765.5,242.5 766.5,242.5 767.5,242.5 768.5,242.5 769.5,242.5 770.5,242.5 771.5,242.5 772.5,242.5 773.5,242.5 774.5,242.5 775.5,242.5 776.5,242.5 777.5,242.5 777.5,241.5 778.5,241.5 779.5,241.5 780.5,241.5 781.5,241.5 782.5,242.5 783.5,240.5 784.5,241.5 785.5,241.5 786.5,241.5 787.5,241.5 788.5,240.5 789.5,241.5 790.5,241.5 791.5,241.5 792.5,241.5 793.5,240.5 794.5,241.5 795.5,240.5 796.5,240.5 797.5,240.5 798.5,240.5 799.5,240.5 800.5,240.5 801.5,240.5 802.5,239.5 803.5,240.5 804.5,240.5 805.5,240.5 806.5,241.5 806.5,238.5 807.5,240.5 808.5,239.5 809.5,239.5 810.5,239.5 811.5,239.5 812.5,239.5 813.5,240.5 814.5,238.5 815.5,240.5 816.5,239.5 817.5,239.5 818.5,239.5 819.5,239.5 819.5,239.5 820.5,238.5 821.5,237.5 822.5,238.5 823.5,238.5 824.5,239.5 825.5,238.5 826.5,238.5 827.5,238.5 828.5,238.5 829.5,237.5 830.5,238.5 831.5,238.5 832.5,238.5 832.5,237.5 833.5,237.5 834.5,237.5 835.5,237.5 836.5,237.5 837.5,237.5 838.5,237.5 839.5,237.5 840.5,237.5 841.5,237.5 842.5,237.5 843.5,237.5 844.5,236.5 845.5,235.5 846.5,236.5 847.5,236.5 848.5,236.5 849.5,236.5 850.5,237.5 851.5,236.5 852.5,236.5 853.5,236.5 854.5,236.5 855.5,236.5 856.5,235.5 857.5,236.5" fill="none" stroke="#0000ff" stroke-width="1"/>
<polyline points="612.5,904.5 612.5,905.5 613.5,905.5 613.5,906.5 614.5,906.5 614.5,907.5 614.5,908.5 615.5,908.5 616.5,909.5 617.5,909.5 618.5,909.5 619.5,909.5 619.5,908.5 620.5,908.5 621.5,907.5 622.5,908.5 622.5,907.5 623.5,907.5 624.5,907.5 624.5,906.5 625.5,906.5 625.5,905.5 626.5,905.5 626.5,904.5 627.5,904.5 627.5,903.5 628.5,903.5 628.5,902.5 629.5,901.5 629.5,900.5 630.5,900.5 630.5,899.5 630.5,898.5 630.5,897.5 631.5,897.5 631.5,896.5 631.5,895.5 631.5,894.5 631.5,893.5 632.5,893.5 632.5,892.5 632.5,891.5 632.5,890.5 632.5,889.5 633.5,889.5 633.5,888.5 633.5,887.5 633.5,886.5 633.5,885.5 633.5,884.5 634.5,884.5 634.5,883.5 634.5,882.5 634.5,881.5 634.5,880.5 634.5,879.5 634.5,878.5 635.5,878.5 635.5,877.5 635.5,876.5 635.5,875.5 635.5,874.5 635.5,873.5 635.5,872.5 636.5,872.5 636.5,871.5 636.5,870.5 636.5,869.5 636.5,868.5 636.5,867.5 636.5,866.5 636.5,865.5 637.5,865.5 637.5,864.5 637.5,863.5 637.5,862.5 637.5,861.5 637.5,860.5 637.5,859.5 637.5,858.5 637.5,857.5 637.5,856.5 638.5,856.5 638.5,855.5 638.5,854.5 638.5,853.5 638.5,852.5 638.5,851.5 638.5,850.5 638.5,849.5 638.5,848.5 638.5,847.5 638.5,846.5 638.5,845.5 639.5,844.5 639.5,843.5 639.5,842.5 639.5,841.5 639.5,840.5 639.5,839.5 639.5,838.5 639.5,837.5 639.5,836.5 639.5,835.5 639.5,834.5 639.5,833.5 639.5,832.5 639.5,831.5 639.5,830.5 640.5,830.5 640.5,829.5 640.5,828.5 640.5,827.5 640.5,826.5 640.5,825.5 640.5,824.5 640.5,823.5 640.5,822.5 640.5,821.5 640.5,820.5 640.5,819.5 640.5,818.5 640.5,817.5 640.5,816.5 640.5,815.5 640.5,814.5 641.5,814.5 641.5,813.5 641.5,812.5 641.5,811.5 641.5,810.5 641.5,809.5 641.5,808.5 641.5,807.5 641.5,806.5 641.5,805.5 641.5,804.5 641.5,803.5 641.5,802.5 641.5,801.5 641.5,800.5 641.5,799.5 641.5,798.5 641.5,797.5 641.5,796.5 641.5,795.5 642.5,795.5 642.5,794.5 642.5,793.5 642.5,792.5 642.5,791.5 642.5,790.5 642.5,789.5 642.5,788.5 642.5,787.5 642.5,786.5 642.5,785.5 642.5,784.5 642.5,783.5 642.5,782.5 642.5,781.5 642.5,780.5 642.5,779.5 642.5,778.5 642.5,777.5 642.5,776.5 642.5,775.5 642.5,774.5 642.5,773.5 643.5,773.5 643.5,772.5 643.5,771.5 643.5,770.5 643.5,769.5 643.5,768.5 643.5,767.5 643.5,766.5 643.5,765.5 643.5,764.5 643.5,763.5 643.5,762.5 643.5,761.5 643.5,760.5 643.5,759.5 643.5,758.5 643.5,757.5 643.5,756.5 643.5,755.5 643.5,754.5 643.5,753.5 643.5,752.5 643.5,751.5 643.5,750.5 644.5,749.5 644.5,748.5 644.5,747.5 644.5,746.5 644.5,745.5 644.5,744.5 644.5,743.5 644.5,742.5 644.5,741.5 644.5,740.5 644.5,739.5 644.5,738.5 644.5,737.5 644.5,736.5 644.5,735.5 644.5,734.5 644.5,733.5 644.5,732.5 644.5,731.5 644.5,730.5 644.5,729.5 644.5,728.5 644.5,727.5 644.5,726.5 644.5,725.5 645.5,724.5 645.5,723.5 645.5,722.5 645.5,721.5 645.5,720.5 645.5,719.5 645.5,718.5 645.5,717.5 645.5,716.5 645.5,715.5 645.5,714.5 645.5,713.5 645.5,712.5 645.5,711.5 645.5,710.5 645.5,709.5 645.5,708.5 645.5,707.5 645.5,706.5 645.5,705.5 645.5,704.5 645.5,703.5 645.5,702.5 645.5,701.5 645.5,700.5 645.5,699.5 646.5,699.5 646.5,698.5 646.5,697.5 646.5,696.5 646.5,695.5 646.5,694.5 646.5,693.5 646.5,692.5 646.5,691.5 646.5,690.5 646.5,689.5 646.5,688.5 646.5,687.5 646.5,686.5 646.5,685.5 646.5,684.5 646.5,683.5 646.5,682.5 646.5,681.5 646.5,680.5 646.5,679.5 646.5,678.5 646.5,677.5 646.5,676.5 646.5,675.5 646.5,674.5 646.5,673.5 646.5,672.5 647.5,672.5 647.5,671.5 647.5,670.5 647.5,669.5 647.5,668.5 647.5,667.5 647.5,666.5 647.5,665.5 647.5,664.5 647.5,663.5 647.5,662.5 647.5,661.5 647.5,660.5 647.5,659.5 647.5,658.5 647.5,657.5 647.5,656.5 647.5,655.5 647.5,654.5 647.5,653.5 647.5,652.5 647.5,651.5 647.5,650.5 647.5,649.5 647.5,648.5 647.5,647.5 647.5,646.5 647.5,645.5 647.5,644.5 647.5,643.5 648.5,643.5 648.5,642.5 648.5,641.5 648.5,640.5 648.5,639.5 648.5,638.5 648.5,637.5 648.5,636.5 648.5,635.5 648.5,634.5 648.5,633.5 648.5,632.5 648.5,631.5 648.5,630.5 648.5,629.5 648.5,628.5 648.5,627.5 648.5,626.5 648.5,625.5 648.5,624.5 648.5,623.5 648.5,622.5 648.5,621.5 648.5,620.5 648.5,619.5 648.5,618.5 648.5,617.5 648.5,616.5 648.5,615.5 648.5,614.5 648.5,613.5 648.5,612.5 648.5,611.5 648.5,610.5 648.5,609.5 648.5,608.5 648.5,607.5 649.5,606.5 649.5,605.5 649.5,604.5 649.5,603.5 649.5,602.5 649.5,601.5 649.5,600.5 649.5,599.5 649.5,598.5 649.5,597.5 649.5,596.5 649.5,595.5 649.5,594.5 649.5,593.5 649.5,592.5 649.5,591.5 649.5,590.5 649.5,589.5 649.5,588.5 649.5,587.5 649.5,586.5 649.5,585.5 649.5,584.5 649.5,583.5 649.5,582.5 649.5,581.5 649.5,580.5 649.5,579.5 649.5,578.5 649.5,577.5 649.5,576.5 649.5,575.5 649.5,574.5 649.5,573.5 649.5,572.5 649.5,571.5 649.5,570.5 649.5,569.5 650.5,568.5 650.5,567.5 650.5,566.5 650.5,565.5 650.5,564.5 650.5,563.5 650.5,562.5 650.5,561.5 650.5,560.5 650.5,559.5 650.5,558.5 650.5,557.5 650.5,556.5 650.5,555.5 650.5,554.5 650.5,553.5 650.5,552.5 650.5,551.5 650.5,550.5 650.5,549.5 650.5,548.5 650.5,547.5 650.5,546.5 650.5,545.5 650.5,544.5 650.5,543.5 650.5,542.5 650.5,541.5 651.5,541.5 651.5,540.5 651.5,539.5 651.5,538.5 651.5,537.5 651.5,536.5 651.5,535.5 651.5,534.5 651.5,533.5 651.5,532.5 651.5,531.5 651.5,530.5 651.5,529.5 651.5,528.5 651.5,527.5 651.5,526.5 651.5,525.5 651.5,524.5 651.5,523.5 651.5,522.5 651.5,521.5 651.5,520.5 651.5,519.5 652.5,519.5 652.5,518.5 652.5,517.5 652.5,516.5 652.5,515.5 652.5,514.5 652.5,513.5 652.5,512.5 652.5,511.5 652.5,510.5 652.5,509.5 652.5,508.5 652.5,507.5 652.5,506.5 652.5,505.5 652.5,504.5 652.5,503.5 652.5,502.5 652.5,501.5 652.5,500.5 652.5,499.5 652.5,498.5 652.5,497.5 652.5,496.5 652.5,495.5 652.5,494.5 652.5,493.5 652.5,492.5 652.5,491.5 653.5,491.5 653.5,490.5 653.5,489.5 653.5,488.5 653.5,487.5 653.5,486.5 653.5,485.5 653.5,484.5 653.5,483.5 653.5,482.5 653.5,481.5 653.5,480.5 653.5,479.5 653.5,478.5 653.5,477.5 653.5,476.5 653.5,475.5 653.5,474.5 653.5,473.5 653.5,472.5 653.5,471.5 653.5,470.5 653.5,469.5 653.5,468.5 653.5,467.5 653.5,466.5 653.5,465.5 653.5,464.5 653.5,463.5 653.5,462.5 653.5,461.5 654.5,461.5 654.5,460.5 654.5,459.5 654.5,458.5 654.5,457.5 654.5,456.5 654.5,455.5 654.5,454.5 654.5,453.5 654.5,452.5 654.5,451.5 654.5,450.5 654.5,449.5 654.5,448.5 654.5,447.5 654.5,446.5 654.5,445.5 654.5,444.5 654.5,443.5 654.5,442.5 654.5,441.5 654.5,440.5 654.5,439.5 654.5,438.5 654.5,437.5 655.5,437.5 655.5,436.5 655.5,435.5 655.5,434.5 655.5,433.5 655.5,432.5 655.5,431.5 655.5,430.5 655.5,429.5 655.5,428.5 655.5,427.5 655.5,426.5 655.5,425.5 655.5,424.5 655.5,423.5 655.5,422.5 655.5,421.5 655.5,420.5 655.5,419.5 655.5,418.5 655.5,417.5 655.5,416.5 655.5,415.5 655.5,414.5 656.5,414.5 656.5,413.5 656.5,412.5 656.5,411.5 656.5,410.5 656.5,409.5 656.5,408.5 656.5,407.5 656.5,406.5 656.5,405.5 656.5,404.5 656.5,403.5 656.5,402.5 656.5,401.5 656.5,400.5 656.5,399.5 656.5,398.5 656.5,397.5 656.5,396.5 656.5,395.5 656.5,394.5 656.5,393.5 657.5,393.5 657.5,392.5 657.5,391.5 657.5,390.5 657.5,389.5 657.5,388.5 657.5,387.5 657.5,386.5 657.5,385.5 657.5,384.5 657.5,383.5 657.5,382.5 657.5,381.5 657.5,380.5 657.5,379.5 657.5,378.5 657.5,377.5 657.5,376.5 657.5,375.5 657.5,374.5 657.5,373.5 658.5,373.5 658.5,372.5 658.5,371.5 658.5,370.5 658.5,369.5 658.5,368.5 658.5,367.5 658.5,366.5 658.5,365.5 658.5,364.5 658.5,363.5 658.5,362.5 658.5,361.5 658.5,360.5 658.5,359.5 658.5,358.5 658.5,357.5 658.5,356.5 658.5,355.5 658.5,354.5 658.5,353.5 658.5,352.5 659.5,352.5 659.5,351.5 659.5,350.5 659.5,349.5 659.5,348.5 659.5,347.5 659.5,346.5 659.5,345.5 659.5,344.5 659.5,343.5 659.5,342.5 659.5,341.5 659.5,340.5 659.5,339.5 659.5,338.5 659.5,337.5 659.5,336.5 659.5,335.5 659.5,334.5 659.5,333.5 659.5,332.5 659.5,331.5 660.5,331.5 660.5,330.5 660.5,329.5 660.5,328.5 660.5,327.5 660.5,326.5 660.5,325.5 660.5,324.5 660.5,323.5 660.5,322.5 660.5,321.5 660.5,320.5 660.5,319.5 660.5,318.5 660.5,317.5 660.5,316.5 660.5,315.5 660.5,314.5 660.5,313.5 660.5,312.5 660.5,311.5 660.5,310.5 660.5,309.5 661.5,309.5 661.5,308.5 661.5,307.5 661.5,306.5 661.5,305.5 661.5,304.5 661.5,303.5 661.5,302.5 661.5,301.5 661.5,300.5 661.5,299.5 661.5,298.5 661.5,297.5 661.5,296.5 661.5,295.5 661.5,294.5 661.5,293.5 661.5,292.5 661.5,291.5 661.5,290.5 661.5,289.5 661.5,288.5 662.5,288.5 662.5,287.5 662.5,286.5 662.5,285.5 662.5,284.5 662.5,283.5 662.5,282.5 662.5,281.5 662.5,280.5 662.5,279.5 662.5,278.5 662.5,277.5 662.5,276.5 662.5,275.5 662.5,274.5 662.5,273.5 662.5,272.5 662.5,271.5 662.5,270.5 662.5,269.5 663.5,268.5 663.5,267.5 663.5,266.5 663.5,265.5 663.5,264.5 663.5,263.5 663.5,262.5 663.5,261.5 663.5,260.5 663.5,259.5 663.5,258.5 663.5,257.5 663.5,256.5 663.5,255.5 663.5,254.5 663.5,253.5 663.5,252.5 663.5,251.5 664.5,251.5 664.5,250.5 664.5,249.5 664.5,248.5 664.5,247.5 664.5,246.5 664.5,245.5 664.5,244.5 664.5,243.5 664.5,242.5 664.5,241.5 664.5,240.5 664.5,239.5 664.5,238.5 665.5,237.5 665.5,236.5 665.5,235.5 665.5,234.5 665.5,233.5 665.5,232.5 665.5,231.5 665.5,230.5 665.5,229.5 665.5,228.5 666.5,228.5 666.5,227.5 666.5,226.5 666.5,225.5 666.5,224.5 666.5,223.5 666.5,222.5 666.5,221.5 666.5,220.5 666.5,219.5 667.5,218.5 667.5,217.5 667.5,216.5 667.5,215.5 667.5,214.5 667.5,213.5 667.5,212.5 667.5,211.5 668.5,210.5 668.5,209.5 668.5,208.5 668.5,207.5 668.5,206.5 668.5,205.5 668.5,204.5 669.5,204.5 669.5,203.5 669.5,202.5 669.5,201.5 669.5,200.5 669.5,199.5 670.5,199.5 670.5,198.5 670.5,197.5 670.5,196.5 670.5,195.5 671.5,195.5 671.5,194.5 671.5,193.5 671.5,192.5 671.5,191.5 671.5,190.5 672.5,190.5 672.5,189.5 672.5,188.5 672.5,187.5 672.5,186.5 673.5,185.5 673.5,184.5 673.5,183.5 673.5,182.5 673.5,181.5 673.5,180.5 674.5,180.5 674.5,179.5 674.5,178.5 674.5,177.5 674.5,176.5 674.5,175.5 675.5,175.5 675.5,174.5 675.5,173.5 675.5,172.5 675.5,171.5 675.5,170.5 676.5,169.5 676.5,168.5 676.5,167.5 676.5,166.5 676.5,165.5 677.5,164.5 677.5,163.5 677.5,162.5 677.5,161.5 677.5,160.5 678.5,160.5 678.5,159.5 678.5,158.5 678.5,157.5 678.5,156.5 679.5,156.5 679.5,155.5 679.5,154.5 679.5,153.5 680.5,153.5 680.5,152.5 680.5,151.5 681.5,151.5 681.5,150.5 681.5,149.5 682.5,149.5 682.5,148.5 683.5,148.5 683.5,147.5 684.5,147.5 684.5,146.5 684.5,145.5 685.5,145.5 685.5,144.5 686.5,144.5 686.5,143.5 687.5,143.5 687.5,142.5 687.5,141.5 688.5,141.5 688.5,140.5 689.5,141.5 689.5,139.5 690.5,139.5 691.5,139.5 691.5,138.5 692.5,138.5 692.5,137.5 693.5,137.5 693.5,136.5 694.5,136.5 695.5,135.5 696.5,135.5 696.5,134.5 697.5,134.5 697.5,133.5 698.5,132.5 698.5,132.5 699.5,132.5 700.5,131.5 700.5,131.5 701.5,131.5 702.5,132.5 703.5,131.5 704.5,131.5 705.5,131.5 705.5,130.5 706.5,130.5 707.5,130.5 708.5,130.5" fill="none" stroke="#aa00ff" stroke-width="1"/>
<polyline points="711.5,130.5 712.5,130.5 713.5,129.5 714.5,130.5 714.5,129.5 715.5,129.5 716.5,129.5 717.5,129.5 718.5,129.5" fill="none" stroke="#aa00ff" stroke-width="1"/>
<polyline points="720.5,129.5 721.5,129.5 722.5,129.5 723.5,129.5 724.5,129.5 725.5,129.5 726.5,130.5 727.5,127.5 728.5,128.5 729.5,128.5 730.5,128.5 731.5,128.5 732.5,128.5 733.5,128.5 734.5,129.5 735.5,128.5 736.5,128.5 737.5,128.5 738.5,128.5 738.5,127.5 739.5,127.5 740.5,127.5 741.5,127.5 742.5,126.5 743.5,127.5 744.5,127.5 745.5,127.5 746.5,127.5 747.5,127.5 748.5,126.5 749.5,128.5 750.5,127.5 751.5,127.5 752.5,127.5 752.5,126.5 753.5,126.5 754.5,127.5 755.5,126.5 756.5,125.5 757.5,125.5 758.5,126.5 759.5,126.5 760.5,127.5 761.5,126.5 762.5,126.5 763.5,126.5 764.5,127.5 765.5,127.5 766.5,125.5 767.5,126.5" fill="none" stroke="#aa00ff" stroke-width="1"/>
</svg>
<div style="position:absolute;top:76.88px;font-size:14.2px;line-height:14.2px;color:#8e8e8e;white-space:nowrap;letter-spacing:0.9px;left:709.30px;width:600px;text-align:center;">2N2222</div>
<div style="position:absolute;top:900.33px;font-size:12.6px;line-height:12.6px;color:#8e8e8e;white-space:nowrap;left:280.30px;width:300px;text-align:right;">0</div>
<div style="position:absolute;top:857.33px;font-size:12.6px;line-height:12.6px;color:#8e8e8e;white-space:nowrap;left:280.30px;width:300px;text-align:right;">0.2</div>
<div style="position:absolute;top:813.33px;font-size:12.6px;line-height:12.6px;color:#8e8e8e;white-space:nowrap;left:280.30px;width:300px;text-align:right;">0.4</div>
<div style="position:absolute;top:769.33px;font-size:12.6px;line-height:12.6px;color:#8e8e8e;white-space:nowrap;left:280.30px;width:300px;text-align:right;">0.6</div>
<div style="position:absolute;top:726.33px;font-size:12.6px;line-height:12.6px;color:#8e8e8e;white-space:nowrap;left:280.30px;width:300px;text-align:right;">0.8</div>
<div style="position:absolute;top:682.33px;font-size:12.6px;line-height:12.6px;color:#8e8e8e;white-space:nowrap;left:280.30px;width:300px;text-align:right;">1</div>
<div style="position:absolute;top:639.33px;font-size:12.6px;line-height:12.6px;color:#8e8e8e;white-space:nowrap;left:280.30px;width:300px;text-align:right;">1.2</div>
<div style="position:absolute;top:595.33px;font-size:12.6px;line-height:12.6px;color:#8e8e8e;white-space:nowrap;left:280.30px;width:300px;text-align:right;">1.4</div>
<div style="position:absolute;top:552.33px;font-size:12.6px;line-height:12.6px;color:#8e8e8e;white-space:nowrap;left:280.30px;width:300px;text-align:right;">1.6</div>
<div style="position:absolute;top:508.33px;font-size:12.6px;line-height:12.6px;color:#8e8e8e;white-space:nowrap;left:280.30px;width:300px;text-align:right;">1.8</div>
<div style="position:absolute;top:465.33px;font-size:12.6px;line-height:12.6px;color:#8e8e8e;white-space:nowrap;left:280.30px;width:300px;text-align:right;">2</div>
<div style="position:absolute;top:421.33px;font-size:12.6px;line-height:12.6px;color:#8e8e8e;white-space:nowrap;left:280.30px;width:300px;text-align:right;">2.2</div>
<div style="position:absolute;top:377.33px;font-size:12.6px;line-height:12.6px;color:#8e8e8e;white-space:nowrap;left:280.30px;width:300px;text-align:right;">2.4</div>
<div style="position:absolute;top:334.33px;font-size:12.6px;line-height:12.6px;color:#8e8e8e;white-space:nowrap;left:280.30px;width:300px;text-align:right;">2.6</div>
<div style="position:absolute;top:290.33px;font-size:12.6px;line-height:12.6px;color:#8e8e8e;white-space:nowrap;left:280.30px;width:300px;text-align:right;">2.8</div>
<div style="position:absolute;top:247.33px;font-size:12.6px;line-height:12.6px;color:#8e8e8e;white-space:nowrap;left:280.30px;width:300px;text-align:right;">3</div>
<div style="position:absolute;top:203.33px;font-size:12.6px;line-height:12.6px;color:#8e8e8e;white-space:nowrap;left:280.30px;width:300px;text-align:right;">3.2</div>
<div style="position:absolute;top:160.33px;font-size:12.6px;line-height:12.6px;color:#8e8e8e;white-space:nowrap;left:280.30px;width:300px;text-align:right;">3.4</div>
<div style="position:absolute;top:116.33px;font-size:12.6px;line-height:12.6px;color:#8e8e8e;white-space:nowrap;left:280.30px;width:300px;text-align:right;">3.6</div>
<div style="position:absolute;top:941.33px;font-size:12.6px;line-height:12.6px;color:#8e8e8e;white-space:nowrap;left:312.50px;width:600px;text-align:center;">0</div>
<div style="position:absolute;top:941.33px;font-size:12.6px;line-height:12.6px;color:#8e8e8e;white-space:nowrap;left:472.50px;width:600px;text-align:center;">1</div>
<div style="position:absolute;top:941.33px;font-size:12.6px;line-height:12.6px;color:#8e8e8e;white-space:nowrap;left:633.50px;width:600px;text-align:center;">2</div>
<div style="position:absolute;top:941.33px;font-size:12.6px;line-height:12.6px;color:#8e8e8e;white-space:nowrap;left:793.50px;width:600px;text-align:center;">3</div>
<div style="position:absolute;top:941.33px;font-size:12.6px;line-height:12.6px;color:#8e8e8e;white-space:nowrap;left:953.50px;width:600px;text-align:center;">4</div>
<div style="position:absolute;top:941.33px;font-size:12.6px;line-height:12.6px;color:#8e8e8e;white-space:nowrap;left:1114.50px;width:600px;text-align:center;">5</div>
<div style="position:absolute;top:962.63px;font-size:13.2px;line-height:13.2px;color:#8e8e8e;white-space:nowrap;left:708.20px;width:600px;text-align:center;">VCollector (V)</div>
<div style="position:absolute;left:238.29999999999995px;top:510px;width:600px;height:14px;line-height:14px;text-align:center;font-size:13.6px;color:#8e8e8e;white-space:nowrap;transform:rotate(-90deg);transform-origin:300px 7px;">ICollector (mA)</div>
<div style="position:absolute;top:111.83px;font-size:13.2px;line-height:13.2px;color:#8e8e8e;white-space:nowrap;left:1367.60px;">0.001mA</div>
<div style="position:absolute;top:137.83px;font-size:13.2px;line-height:13.2px;color:#8e8e8e;white-space:nowrap;left:1367.60px;">0.003mA</div>
<div style="position:absolute;top:163.83px;font-size:13.2px;line-height:13.2px;color:#8e8e8e;white-space:nowrap;left:1367.60px;">0.006mA</div>
<div style="position:absolute;top:189.83px;font-size:13.2px;line-height:13.2px;color:#8e8e8e;white-space:nowrap;left:1367.60px;">0.008mA</div>
<div style="position:absolute;top:215.83px;font-size:13.2px;line-height:13.2px;color:#8e8e8e;white-space:nowrap;left:1367.60px;">0.012mA</div>
<div style="position:absolute;top:241.83px;font-size:13.2px;line-height:13.2px;color:#8e8e8e;white-space:nowrap;left:1367.60px;">0.015mA</div>
<div style="position:absolute;top:267.83px;font-size:13.2px;line-height:13.2px;color:#8e8e8e;white-space:nowrap;left:1367.60px;">0.019mA</div>
<div style="position:absolute;top:293.83px;font-size:13.2px;line-height:13.2px;color:#8e8e8e;white-space:nowrap;left:1367.60px;">0.022mA</div>
</body></html>
